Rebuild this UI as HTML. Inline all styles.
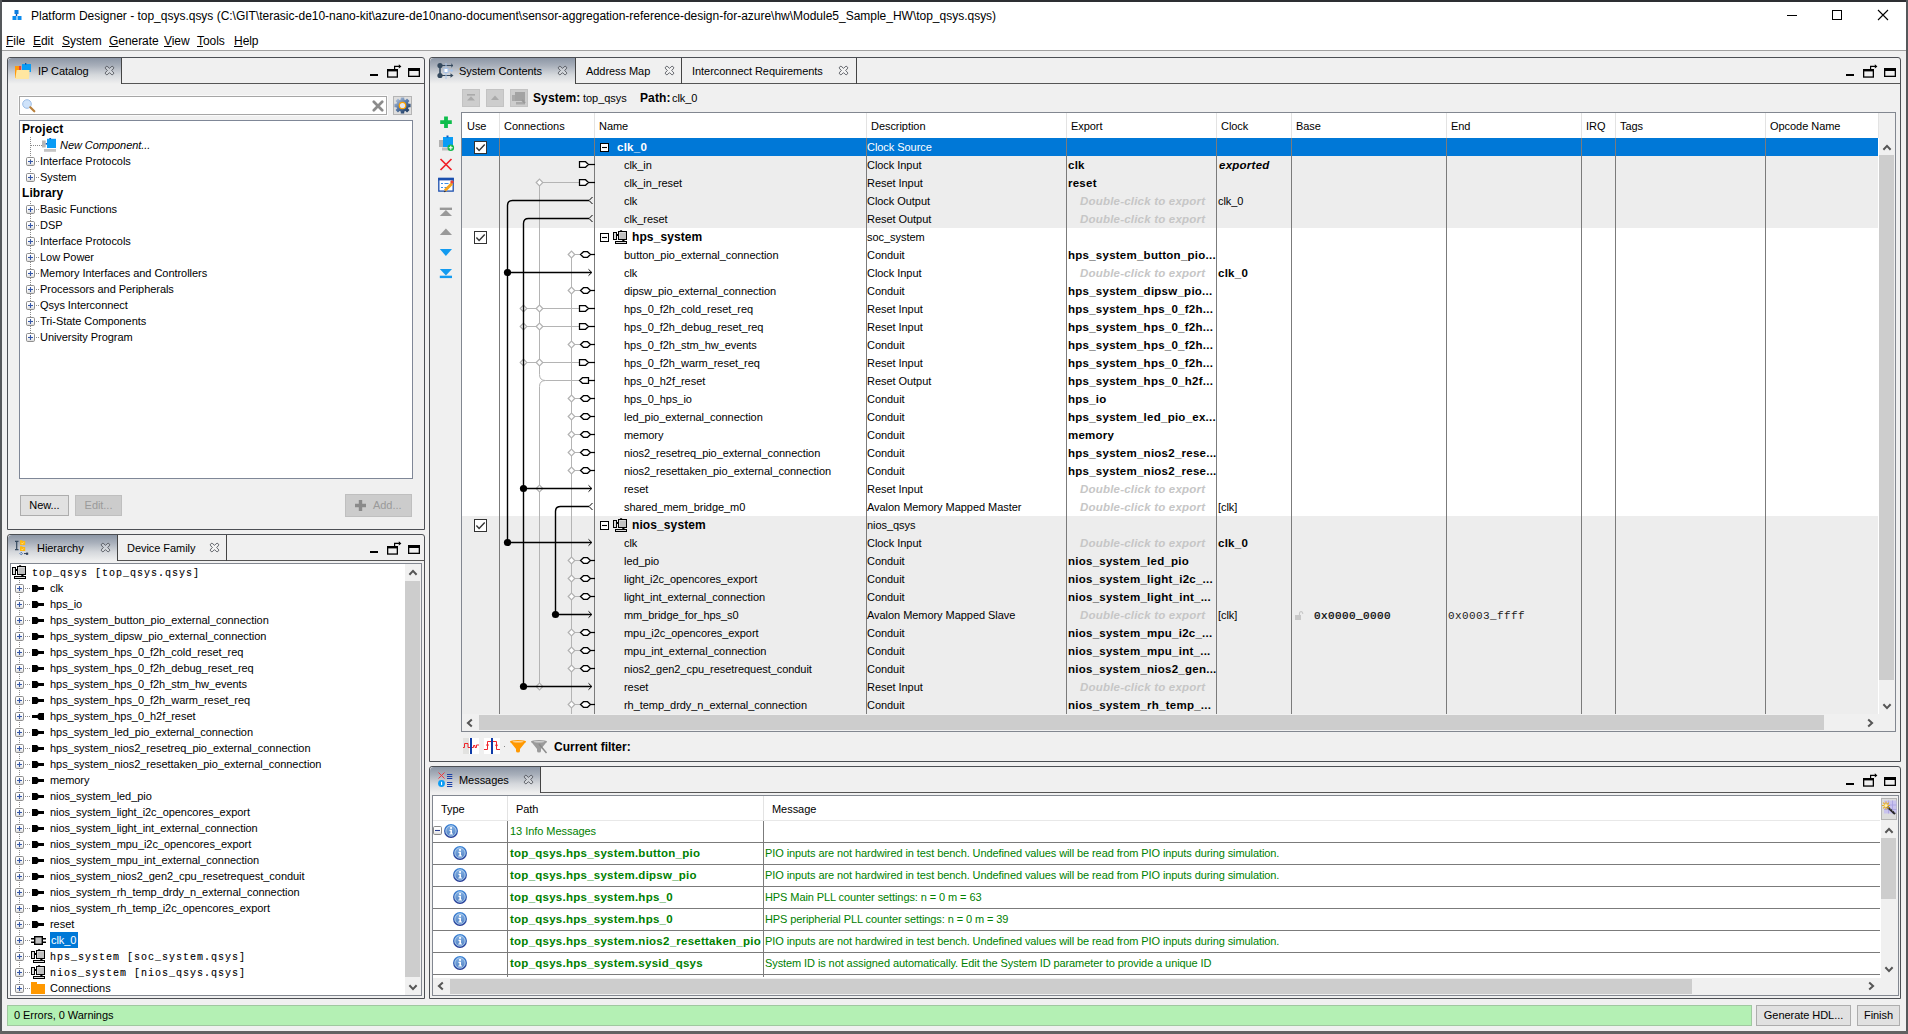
<!DOCTYPE html>
<html lang="en"><head><meta charset="utf-8"><title>Platform Designer - top_qsys.qsys</title>
<style>
*{box-sizing:border-box;margin:0;padding:0}
html,body{width:1908px;height:1034px;overflow:hidden;background:#f0f0f0}
body{position:relative;font-family:"Liberation Sans",sans-serif;font-size:11px;color:#000;line-height:16px;letter-spacing:-.05px}
.a{position:absolute}
.t{position:absolute;white-space:nowrap}
.b{font-weight:bold;font-size:11.5px;letter-spacing:.25px}
.hb{font-weight:bold;font-size:12px;letter-spacing:.1px}
.i{font-style:italic}
.m{font-family:"Liberation Mono",monospace;letter-spacing:.4px}
.mb{font-family:"Liberation Mono",monospace;font-size:10px;letter-spacing:1px;-webkit-text-stroke:.12px #000}
.r16{height:16px;line-height:16px}
.r18{height:18px;line-height:18px}
.r22{height:22px;line-height:22px}
.g{color:#008000}
.dc{color:#c6c6c6;font-style:italic;font-weight:bold;font-size:11.5px;letter-spacing:.2px}
.panel{position:absolute;border:1px solid #4c4f54;border-radius:3px 3px 0 0;background:#f0f0f0}
.tabsel{position:absolute;background:linear-gradient(#8c96a5 0%,#a9b0bb 30%,#d5d8dc 65%,#f0f0f0 100%);border-radius:4px 0 0 0}
.btn{position:absolute;background:#e1e1e1;border:1px solid #adadad;text-align:center}
.btnd{position:absolute;background:#cccccc;border:1px solid #bfbfbf;text-align:center;color:#9a9a9a}
.vsep{position:absolute;width:1px;background:#7b7b7b}
.hsep{position:absolute;height:1px;background:#7b7b7b}
.sb{position:absolute;background:#f0f0f0}
.th{position:absolute;background:#cdcdcd}
</style></head>
<body>
<svg width="0" height="0" style="position:absolute"><defs><linearGradient id="ig" x1="0" y1="0" x2="0" y2="1"><stop offset="0" stop-color="#86b4e6"/><stop offset="1" stop-color="#4c7cc0"/></linearGradient><linearGradient id="is" x1="0" y1="0" x2="0" y2="1"><stop offset="0" stop-color="#3c86d8"/><stop offset="1" stop-color="#2a3c94"/></linearGradient><linearGradient id="pg" x1="0" y1="0" x2="0" y2="1"><stop offset="0" stop-color="#fff"/><stop offset=".55" stop-color="#fdfdfd"/><stop offset="1" stop-color="#d6d6d6"/></linearGradient></defs></svg>
<div class="a" style="left:0;top:0;width:1908px;height:1034px;background:#6e6e6e"></div>
<div class="a" style="left:0;top:0;width:1908px;height:2px;background:#2d2f33"></div>
<div class="a" style="left:0;top:0;width:2px;height:1034px;background:#55585b"></div>
<div class="a" style="left:1906px;top:0;width:2px;height:1034px;background:#55585b"></div>
<div class="a" style="left:2px;top:2px;width:1904px;height:1029px;background:#f0f0f0"></div>
<div class="a" style="left:0;top:1031px;width:1908px;height:3px;background:#626262"></div>
<div class="a" style="left:2px;top:2px;width:1904px;height:48px;background:#fff"></div>
<div class="a" style="left:2px;top:50px;width:1904px;height:1px;background:#a0a0a0"></div>
<svg class="a" style="left:12px;top:9px" width="12" height="12" viewBox="0 0 12 12"><rect x="2.5" y="1" width="4" height="4" fill="#0a7de0"/><rect x="0.5" y="7" width="4" height="4" fill="#0a8cf0"/><rect x="5.5" y="7" width="4" height="4" fill="#0a8cf0"/><path d="M4.5 5v2" stroke="#0a50b0" stroke-width="1.4"/></svg>
<div class="t" style="left:31px;top:7px;height:18px;line-height:18px;font-size:12px;letter-spacing:-.012px">Platform Designer - top_qsys.qsys (C:\GIT\terasic-de10-nano-kit\azure-de10nano-document\sensor-aggregation-reference-design-for-azure\hw\Module5_Sample_HW\top_qsys.qsys)</div>
<svg class="a" style="left:1780px;top:5px" width="120" height="22" viewBox="0 0 120 22"><path d="M7 10.5h10" stroke="#000" stroke-width="1"/><rect x="52.5" y="5.5" width="9" height="9" fill="none" stroke="#000" stroke-width="1"/><path d="M98 5l10 10M108 5l-10 10" stroke="#000" stroke-width="1.1"/></svg>
<div class="t" style="left:6px;top:32px;height:18px;line-height:18px;font-size:12px"><u>F</u>ile</div>
<div class="t" style="left:33px;top:32px;height:18px;line-height:18px;font-size:12px"><u>E</u>dit</div>
<div class="t" style="left:62px;top:32px;height:18px;line-height:18px;font-size:12px"><u>S</u>ystem</div>
<div class="t" style="left:109px;top:32px;height:18px;line-height:18px;font-size:12px"><u>G</u>enerate</div>
<div class="t" style="left:164px;top:32px;height:18px;line-height:18px;font-size:12px"><u>V</u>iew</div>
<div class="t" style="left:197px;top:32px;height:18px;line-height:18px;font-size:12px"><u>T</u>ools</div>
<div class="t" style="left:234px;top:32px;height:18px;line-height:18px;font-size:12px"><u>H</u>elp</div>
<div class="panel" style="left:7px;top:57px;width:418px;height:473px"></div>
<div class="tabsel" style="left:8px;top:58px;width:113px;height:26px"></div>
<div class="a" style="left:121px;top:83px;width:303px;height:1px;background:#555"></div>
<div class="a" style="left:121px;top:58px;width:1px;height:26px;background:#444"></div>
<svg class="a" style="left:15px;top:63px" width="16" height="16" viewBox="0 0 16 16"><rect x="0" y="3" width="5" height="12" fill="#ff9a0a"/><rect x="4" y="3" width="2.2" height="4" fill="#e8453c"/><rect x="7" y="1" width="9" height="8" fill="#0a9cf5"/><rect x="10" y="0" width="1.3" height="1.6" fill="#0a4ea8"/><path d="M1.6 7h13l-.8 9H.2z" fill="#ffe6a0"/></svg>
<div class="t" style="left:38px;top:63px;height:16px;line-height:16px">IP Catalog</div>
<svg class="a" style="left:104px;top:65px" width="11" height="11" viewBox="0 0 11 11"><path d="M5.50 3.38L7.13 1.75A1.5 1.5 0 0 1 9.25 3.87L7.62 5.50L7.62 5.50L9.25 7.13A1.5 1.5 0 0 1 7.13 9.25L5.50 7.62L5.50 7.62L3.87 9.25A1.5 1.5 0 0 1 1.75 7.13L3.38 5.50L3.38 5.50L1.75 3.87A1.5 1.5 0 0 1 3.87 1.75L5.50 3.38Z" fill="rgba(255,255,255,.22)" stroke="#50545a" stroke-width=".9"/></svg>
<svg class="a" style="left:370px;top:65px" width="54" height="16" viewBox="0 0 54 16" overflow="visible"><rect x="0" y="9" width="8" height="2" fill="#000"/><rect x="17.650" y="4.650" width="9.700" height="7.400" fill="none" stroke="#000" stroke-width="1.300"/><rect x="17" y="4" width="11" height="2.400" fill="#000"/><path d="M24.600 4.200V1.400H29.500" fill="none" stroke="#000" stroke-width="1.200"/><path d="M28.800 -.7L31.400 1.400L28.800 3.500Z" fill="#000"/><rect x="38.650" y="3.650" width="10.700" height="7.700" fill="none" stroke="#000" stroke-width="1.300"/><rect x="38" y="3" width="12" height="3" fill="#000"/></svg>
<div class="a" style="left:18px;top:95px;width:370px;height:21px;background:#fafafa"></div><div class="a" style="left:19px;top:96px;width:368px;height:19px;background:#fff;border:1px solid #a6a6a6"></div>
<svg class="a" style="left:22px;top:99px" width="14" height="14" viewBox="0 0 14 14"><circle cx="5" cy="5" r="4.3" fill="#cfe3fa" stroke="#9dbde6" stroke-width="1"/><path d="M8.3 8.3l4 4" stroke="#b9813d" stroke-width="2.2" stroke-linecap="round"/></svg>
<svg class="a" style="left:372px;top:100px" width="12" height="12" viewBox="0 0 12 12"><path d="M1.800 1.800l8.400 8.400M10.200 1.800l-8.400 8.400" stroke="#8b8b8b" stroke-width="2.700" stroke-linecap="round"/></svg>
<div class="a" style="left:393px;top:96px;width:19px;height:19px;background:#dedede;border:1px solid #b4b4b4"></div>
<svg class="a" style="left:394px;top:97px" width="17" height="17" viewBox="0 0 17 17"><defs><linearGradient id="gg" gradientUnits="userSpaceOnUse" x1="2" y1="1" x2="14" y2="16"><stop offset="0" stop-color="#b9c8de"/><stop offset=".45" stop-color="#5f7fab"/><stop offset="1" stop-color="#19365c"/></linearGradient></defs><path d="M6.76 2.45L6.77 0.38L10.23 0.38L10.24 2.45L11.55 2.99L13.02 1.54L15.46 3.98L14.01 5.45L14.55 6.76L16.62 6.77L16.62 10.23L14.55 10.24L14.01 11.55L15.46 13.02L13.02 15.46L11.55 14.01L10.24 14.55L10.23 16.62L6.77 16.62L6.76 14.55L5.45 14.01L3.98 15.46L1.54 13.02L2.99 11.55L2.45 10.24L0.38 10.23L0.38 6.77L2.45 6.76L2.99 5.45L1.54 3.98L3.98 1.54L5.45 2.99Z" fill="url(#gg)"/><circle cx="8.500" cy="8.500" r="3.800" fill="#ffa400"/><circle cx="8.500" cy="8.500" r="2.600" fill="#e6e9ef"/></svg>
<div class="a" style="left:19px;top:120px;width:394px;height:359px;background:#fff;border:1px solid #7f8797"></div>
<div class="t hb r16" style="left:22px;top:121px">Project</div>
<div class="a" style="left:31px;top:145px;width:11px;height:1px;background-image:linear-gradient(90deg,#8a8a8a 50%,transparent 50%);background-size:2px 1px"></div>
<svg class="a" style="left:42px;top:138px" width="15" height="15" viewBox="0 0 15 15"><rect x="0" y="2.500" width="3.700" height="7" fill="#b8b8b8"/><rect x="2" y="11" width="12" height="2.800" fill="#c4c4c4"/><rect x="5" y=".8" width="9" height="9.200" fill="#0a9cf5"/><rect x="7.300" y="0" width="1.800" height="1.200" fill="#0a5cc0"/><rect x="3.700" y="5" width="1.300" height="1.600" fill="#0a5cc0"/></svg>
<div class="t i r16" style="left:60px;top:137px">New Component...</div>
<svg class="a" style="left:26px;top:157px" width="9" height="9" viewBox="0 0 9 9"><rect x=".5" y=".5" width="8" height="8" rx="1.200" fill="url(#pg)" stroke="#8f8f8f"/><path d="M2 4.500h5" stroke="#3557a8" stroke-width="1.100"/><path d="M4.500 2v5" stroke="#3557a8" stroke-width="1.100"/></svg>
<div class="a" style="left:36px;top:161px;width:4px;height:1px;background-image:linear-gradient(90deg,#8a8a8a 50%,transparent 50%);background-size:2px 1px"></div>
<div class="t r16" style="left:40px;top:153px">Interface Protocols</div>
<svg class="a" style="left:26px;top:173px" width="9" height="9" viewBox="0 0 9 9"><rect x=".5" y=".5" width="8" height="8" rx="1.200" fill="url(#pg)" stroke="#8f8f8f"/><path d="M2 4.500h5" stroke="#3557a8" stroke-width="1.100"/><path d="M4.500 2v5" stroke="#3557a8" stroke-width="1.100"/></svg>
<div class="a" style="left:36px;top:177px;width:4px;height:1px;background-image:linear-gradient(90deg,#8a8a8a 50%,transparent 50%);background-size:2px 1px"></div>
<div class="t r16" style="left:40px;top:169px">System</div>
<div class="t hb r16" style="left:22px;top:185px">Library</div>
<svg class="a" style="left:26px;top:205px" width="9" height="9" viewBox="0 0 9 9"><rect x=".5" y=".5" width="8" height="8" rx="1.200" fill="url(#pg)" stroke="#8f8f8f"/><path d="M2 4.500h5" stroke="#3557a8" stroke-width="1.100"/><path d="M4.500 2v5" stroke="#3557a8" stroke-width="1.100"/></svg>
<div class="a" style="left:36px;top:209px;width:4px;height:1px;background-image:linear-gradient(90deg,#8a8a8a 50%,transparent 50%);background-size:2px 1px"></div>
<div class="t r16" style="left:40px;top:201px">Basic Functions</div>
<svg class="a" style="left:26px;top:221px" width="9" height="9" viewBox="0 0 9 9"><rect x=".5" y=".5" width="8" height="8" rx="1.200" fill="url(#pg)" stroke="#8f8f8f"/><path d="M2 4.500h5" stroke="#3557a8" stroke-width="1.100"/><path d="M4.500 2v5" stroke="#3557a8" stroke-width="1.100"/></svg>
<div class="a" style="left:36px;top:225px;width:4px;height:1px;background-image:linear-gradient(90deg,#8a8a8a 50%,transparent 50%);background-size:2px 1px"></div>
<div class="t r16" style="left:40px;top:217px">DSP</div>
<svg class="a" style="left:26px;top:237px" width="9" height="9" viewBox="0 0 9 9"><rect x=".5" y=".5" width="8" height="8" rx="1.200" fill="url(#pg)" stroke="#8f8f8f"/><path d="M2 4.500h5" stroke="#3557a8" stroke-width="1.100"/><path d="M4.500 2v5" stroke="#3557a8" stroke-width="1.100"/></svg>
<div class="a" style="left:36px;top:241px;width:4px;height:1px;background-image:linear-gradient(90deg,#8a8a8a 50%,transparent 50%);background-size:2px 1px"></div>
<div class="t r16" style="left:40px;top:233px">Interface Protocols</div>
<svg class="a" style="left:26px;top:253px" width="9" height="9" viewBox="0 0 9 9"><rect x=".5" y=".5" width="8" height="8" rx="1.200" fill="url(#pg)" stroke="#8f8f8f"/><path d="M2 4.500h5" stroke="#3557a8" stroke-width="1.100"/><path d="M4.500 2v5" stroke="#3557a8" stroke-width="1.100"/></svg>
<div class="a" style="left:36px;top:257px;width:4px;height:1px;background-image:linear-gradient(90deg,#8a8a8a 50%,transparent 50%);background-size:2px 1px"></div>
<div class="t r16" style="left:40px;top:249px">Low Power</div>
<svg class="a" style="left:26px;top:269px" width="9" height="9" viewBox="0 0 9 9"><rect x=".5" y=".5" width="8" height="8" rx="1.200" fill="url(#pg)" stroke="#8f8f8f"/><path d="M2 4.500h5" stroke="#3557a8" stroke-width="1.100"/><path d="M4.500 2v5" stroke="#3557a8" stroke-width="1.100"/></svg>
<div class="a" style="left:36px;top:273px;width:4px;height:1px;background-image:linear-gradient(90deg,#8a8a8a 50%,transparent 50%);background-size:2px 1px"></div>
<div class="t r16" style="left:40px;top:265px">Memory Interfaces and Controllers</div>
<svg class="a" style="left:26px;top:285px" width="9" height="9" viewBox="0 0 9 9"><rect x=".5" y=".5" width="8" height="8" rx="1.200" fill="url(#pg)" stroke="#8f8f8f"/><path d="M2 4.500h5" stroke="#3557a8" stroke-width="1.100"/><path d="M4.500 2v5" stroke="#3557a8" stroke-width="1.100"/></svg>
<div class="a" style="left:36px;top:289px;width:4px;height:1px;background-image:linear-gradient(90deg,#8a8a8a 50%,transparent 50%);background-size:2px 1px"></div>
<div class="t r16" style="left:40px;top:281px">Processors and Peripherals</div>
<svg class="a" style="left:26px;top:301px" width="9" height="9" viewBox="0 0 9 9"><rect x=".5" y=".5" width="8" height="8" rx="1.200" fill="url(#pg)" stroke="#8f8f8f"/><path d="M2 4.500h5" stroke="#3557a8" stroke-width="1.100"/><path d="M4.500 2v5" stroke="#3557a8" stroke-width="1.100"/></svg>
<div class="a" style="left:36px;top:305px;width:4px;height:1px;background-image:linear-gradient(90deg,#8a8a8a 50%,transparent 50%);background-size:2px 1px"></div>
<div class="t r16" style="left:40px;top:297px">Qsys Interconnect</div>
<svg class="a" style="left:26px;top:317px" width="9" height="9" viewBox="0 0 9 9"><rect x=".5" y=".5" width="8" height="8" rx="1.200" fill="url(#pg)" stroke="#8f8f8f"/><path d="M2 4.500h5" stroke="#3557a8" stroke-width="1.100"/><path d="M4.500 2v5" stroke="#3557a8" stroke-width="1.100"/></svg>
<div class="a" style="left:36px;top:321px;width:4px;height:1px;background-image:linear-gradient(90deg,#8a8a8a 50%,transparent 50%);background-size:2px 1px"></div>
<div class="t r16" style="left:40px;top:313px">Tri-State Components</div>
<svg class="a" style="left:26px;top:333px" width="9" height="9" viewBox="0 0 9 9"><rect x=".5" y=".5" width="8" height="8" rx="1.200" fill="url(#pg)" stroke="#8f8f8f"/><path d="M2 4.500h5" stroke="#3557a8" stroke-width="1.100"/><path d="M4.500 2v5" stroke="#3557a8" stroke-width="1.100"/></svg>
<div class="a" style="left:36px;top:337px;width:4px;height:1px;background-image:linear-gradient(90deg,#8a8a8a 50%,transparent 50%);background-size:2px 1px"></div>
<div class="t r16" style="left:40px;top:329px">University Program</div>
<div class="a" style="left:30px;top:137px;width:1px;height:24px;background-image:linear-gradient(#8a8a8a 50%,transparent 50%);background-size:1px 2px"></div>
<div class="a" style="left:30px;top:169px;width:1px;height:4px;background-image:linear-gradient(#8a8a8a 50%,transparent 50%);background-size:1px 2px"></div>
<div class="a" style="left:30px;top:201px;width:1px;height:4px;background-image:linear-gradient(#8a8a8a 50%,transparent 50%);background-size:1px 2px"></div>
<div class="a" style="left:30px;top:214px;width:1px;height:7px;background-image:linear-gradient(#8a8a8a 50%,transparent 50%);background-size:1px 2px"></div>
<div class="a" style="left:30px;top:230px;width:1px;height:7px;background-image:linear-gradient(#8a8a8a 50%,transparent 50%);background-size:1px 2px"></div>
<div class="a" style="left:30px;top:246px;width:1px;height:7px;background-image:linear-gradient(#8a8a8a 50%,transparent 50%);background-size:1px 2px"></div>
<div class="a" style="left:30px;top:262px;width:1px;height:7px;background-image:linear-gradient(#8a8a8a 50%,transparent 50%);background-size:1px 2px"></div>
<div class="a" style="left:30px;top:278px;width:1px;height:7px;background-image:linear-gradient(#8a8a8a 50%,transparent 50%);background-size:1px 2px"></div>
<div class="a" style="left:30px;top:294px;width:1px;height:7px;background-image:linear-gradient(#8a8a8a 50%,transparent 50%);background-size:1px 2px"></div>
<div class="a" style="left:30px;top:310px;width:1px;height:7px;background-image:linear-gradient(#8a8a8a 50%,transparent 50%);background-size:1px 2px"></div>
<div class="a" style="left:30px;top:326px;width:1px;height:7px;background-image:linear-gradient(#8a8a8a 50%,transparent 50%);background-size:1px 2px"></div>
<div class="btn r16" style="left:20px;top:495px;width:49px;height:21px;line-height:19px">New...</div>
<div class="btnd r16" style="left:75px;top:495px;width:47px;height:21px;line-height:19px">Edit...</div>
<div class="btnd r16" style="left:345px;top:494px;width:67px;height:23px;line-height:21px;text-align:left;padding-left:27px">Add...</div>
<svg class="a" style="left:355px;top:500px" width="11" height="11" viewBox="0 0 11 11"><path d="M5.5 0v11M0 5.5h11" stroke="#8a8a8a" stroke-width="3.4"/></svg>
<div class="panel" style="left:7px;top:534px;width:418px;height:465px"></div>
<div class="tabsel" style="left:8px;top:535px;width:109px;height:26px"></div>
<div class="a" style="left:117px;top:560px;width:307px;height:1px;background:#555"></div>
<div class="a" style="left:117px;top:535px;width:1px;height:26px;background:#444"></div>
<svg class="a" style="left:14px;top:539px" width="16" height="17" viewBox="0 0 16 17"><path d="M2.700 2.500v8" stroke="#34495e" stroke-width="1.200"/><path d="M1 2.300h3.500M1 10.700h3.500" stroke="#34495e" stroke-width="1.300"/><path d="M6 1.200h2.200l.6 .9h2.400v3.900h-5.200z" fill="#fdb813"/><path d="M6 7.200h2.200l.6 .9h2.400v3.900h-5.200z" fill="#fdb813"/><path d="M7.500 4.300l.9 .5l1.300-1.300M7.500 10.300l.9 .5l1.300-1.300" stroke="#fff3c0" stroke-width=".7" fill="none"/><path d="M7.200 13.300l1.300 1.300l-1.300 1.300l-1.300-1.300z" fill="none" stroke="#2d5fa8" stroke-width=".8"/><path d="M10 14.600h3" stroke="#2d3e5a" stroke-width="1"/><rect x="12" y="13.600" width="2.200" height="2.200" fill="#2d3e5a"/></svg>
<div class="t" style="left:37px;top:540px;height:16px;line-height:16px">Hierarchy</div>
<svg class="a" style="left:100px;top:542px" width="11" height="11" viewBox="0 0 11 11"><path d="M5.50 3.38L7.13 1.75A1.5 1.5 0 0 1 9.25 3.87L7.62 5.50L7.62 5.50L9.25 7.13A1.5 1.5 0 0 1 7.13 9.25L5.50 7.62L5.50 7.62L3.87 9.25A1.5 1.5 0 0 1 1.75 7.13L3.38 5.50L3.38 5.50L1.75 3.87A1.5 1.5 0 0 1 3.87 1.75L5.50 3.38Z" fill="rgba(255,255,255,.22)" stroke="#50545a" stroke-width=".9"/></svg>
<div class="t" style="left:127px;top:540px;height:16px;line-height:16px">Device Family</div>
<svg class="a" style="left:209px;top:542px" width="11" height="11" viewBox="0 0 11 11"><path d="M5.50 3.38L7.13 1.75A1.5 1.5 0 0 1 9.25 3.87L7.62 5.50L7.62 5.50L9.25 7.13A1.5 1.5 0 0 1 7.13 9.25L5.50 7.62L5.50 7.62L3.87 9.25A1.5 1.5 0 0 1 1.75 7.13L3.38 5.50L3.38 5.50L1.75 3.87A1.5 1.5 0 0 1 3.87 1.75L5.50 3.38Z" fill="rgba(255,255,255,.22)" stroke="#50545a" stroke-width=".9"/></svg>
<div class="a" style="left:226px;top:535px;width:1px;height:26px;background:#444"></div>
<svg class="a" style="left:370px;top:542px" width="54" height="16" viewBox="0 0 54 16" overflow="visible"><rect x="0" y="9" width="8" height="2" fill="#000"/><rect x="17.650" y="4.650" width="9.700" height="7.400" fill="none" stroke="#000" stroke-width="1.300"/><rect x="17" y="4" width="11" height="2.400" fill="#000"/><path d="M24.600 4.200V1.400H29.500" fill="none" stroke="#000" stroke-width="1.200"/><path d="M28.800 -.7L31.400 1.400L28.800 3.500Z" fill="#000"/><rect x="38.650" y="3.650" width="10.700" height="7.700" fill="none" stroke="#000" stroke-width="1.300"/><rect x="38" y="3" width="12" height="3" fill="#000"/></svg>
<div class="a" style="left:10px;top:563px;width:412px;height:433px;background:#fff;border:1px solid #828790"></div>
<div class="sb" style="left:405px;top:564px;width:16px;height:431px"></div>
<div class="th" style="left:405px;top:581px;width:15px;height:396px"></div>
<svg class="a" style="left:408px;top:569px" width="10" height="7" viewBox="0 0 10 7"><path d="M1.400 5.800l3.600-3.900l3.600 3.900" fill="none" stroke="#555" stroke-width="2"/></svg>
<svg class="a" style="left:408px;top:984px" width="10" height="7" viewBox="0 0 10 7"><path d="M1.400 1.200l3.600 3.900l3.600-3.900" fill="none" stroke="#555" stroke-width="2"/></svg>
<svg class="a" style="left:12px;top:565px" width="14" height="14" viewBox="0 0 14 14"><rect x=".5" y="2.500" width="3" height="7" fill="#dcdcdc" stroke="#000"/><rect x="4" y="4" width="1.500" height="2" fill="#000"/><rect x="5.500" y="1.500" width="8" height="8" fill="#c0c0c0" stroke="#000"/><path d="M6.500 8.500v-6h6" fill="none" stroke="#d9d9d9"/><path d="M7 1.500L7.500 .4h1.200L9.200 1.500z" fill="#000" stroke="#000" stroke-width=".6"/><rect x="9.300" y="10" width="2.200" height="1.500" fill="#000"/><rect x="2.500" y="11.500" width="11" height="2" fill="#dcdcdc" stroke="#000"/></svg>
<div class="t mb r16" style="left:32px;top:566px">top_qsys [top_qsys.qsys]</div>
<div class="a" style="left:19px;top:580px;width:1px;height:412px;background-image:linear-gradient(#8a8a8a 50%,transparent 50%);background-size:1px 2px"></div>
<svg class="a" style="left:15px;top:584px" width="9" height="9" viewBox="0 0 9 9"><rect x=".5" y=".5" width="8" height="8" rx="1.200" fill="url(#pg)" stroke="#8f8f8f"/><path d="M2 4.500h5" stroke="#3557a8" stroke-width="1.100"/><path d="M4.500 2v5" stroke="#3557a8" stroke-width="1.100"/></svg>
<div class="a" style="left:25px;top:588px;width:6px;height:1px;background-image:linear-gradient(90deg,#8a8a8a 50%,transparent 50%);background-size:2px 1px"></div>
<svg class="a" style="left:32px;top:585px" width="12" height="7" viewBox="0 0 12 7"><path d="M0 0h5l1.600 2h5.400v3h-5.400l-1.600 2h-5z" fill="#000"/></svg>
<div class="t r16" style="left:50px;top:580px">clk</div>
<svg class="a" style="left:15px;top:600px" width="9" height="9" viewBox="0 0 9 9"><rect x=".5" y=".5" width="8" height="8" rx="1.200" fill="url(#pg)" stroke="#8f8f8f"/><path d="M2 4.500h5" stroke="#3557a8" stroke-width="1.100"/><path d="M4.500 2v5" stroke="#3557a8" stroke-width="1.100"/></svg>
<div class="a" style="left:25px;top:604px;width:6px;height:1px;background-image:linear-gradient(90deg,#8a8a8a 50%,transparent 50%);background-size:2px 1px"></div>
<svg class="a" style="left:32px;top:601px" width="12" height="7" viewBox="0 0 12 7"><path d="M0 0h5l1.600 2h5.400v3h-5.400l-1.600 2h-5z" fill="#000"/></svg>
<div class="t r16" style="left:50px;top:596px">hps_io</div>
<svg class="a" style="left:15px;top:616px" width="9" height="9" viewBox="0 0 9 9"><rect x=".5" y=".5" width="8" height="8" rx="1.200" fill="url(#pg)" stroke="#8f8f8f"/><path d="M2 4.500h5" stroke="#3557a8" stroke-width="1.100"/><path d="M4.500 2v5" stroke="#3557a8" stroke-width="1.100"/></svg>
<div class="a" style="left:25px;top:620px;width:6px;height:1px;background-image:linear-gradient(90deg,#8a8a8a 50%,transparent 50%);background-size:2px 1px"></div>
<svg class="a" style="left:32px;top:617px" width="12" height="7" viewBox="0 0 12 7"><path d="M0 0h5l1.600 2h5.400v3h-5.400l-1.600 2h-5z" fill="#000"/></svg>
<div class="t r16" style="left:50px;top:612px">hps_system_button_pio_external_connection</div>
<svg class="a" style="left:15px;top:632px" width="9" height="9" viewBox="0 0 9 9"><rect x=".5" y=".5" width="8" height="8" rx="1.200" fill="url(#pg)" stroke="#8f8f8f"/><path d="M2 4.500h5" stroke="#3557a8" stroke-width="1.100"/><path d="M4.500 2v5" stroke="#3557a8" stroke-width="1.100"/></svg>
<div class="a" style="left:25px;top:636px;width:6px;height:1px;background-image:linear-gradient(90deg,#8a8a8a 50%,transparent 50%);background-size:2px 1px"></div>
<svg class="a" style="left:32px;top:633px" width="12" height="7" viewBox="0 0 12 7"><path d="M0 0h5l1.600 2h5.400v3h-5.400l-1.600 2h-5z" fill="#000"/></svg>
<div class="t r16" style="left:50px;top:628px">hps_system_dipsw_pio_external_connection</div>
<svg class="a" style="left:15px;top:648px" width="9" height="9" viewBox="0 0 9 9"><rect x=".5" y=".5" width="8" height="8" rx="1.200" fill="url(#pg)" stroke="#8f8f8f"/><path d="M2 4.500h5" stroke="#3557a8" stroke-width="1.100"/><path d="M4.500 2v5" stroke="#3557a8" stroke-width="1.100"/></svg>
<div class="a" style="left:25px;top:652px;width:6px;height:1px;background-image:linear-gradient(90deg,#8a8a8a 50%,transparent 50%);background-size:2px 1px"></div>
<svg class="a" style="left:32px;top:649px" width="12" height="7" viewBox="0 0 12 7"><path d="M0 0h5l1.600 2h5.400v3h-5.400l-1.600 2h-5z" fill="#000"/></svg>
<div class="t r16" style="left:50px;top:644px">hps_system_hps_0_f2h_cold_reset_req</div>
<svg class="a" style="left:15px;top:664px" width="9" height="9" viewBox="0 0 9 9"><rect x=".5" y=".5" width="8" height="8" rx="1.200" fill="url(#pg)" stroke="#8f8f8f"/><path d="M2 4.500h5" stroke="#3557a8" stroke-width="1.100"/><path d="M4.500 2v5" stroke="#3557a8" stroke-width="1.100"/></svg>
<div class="a" style="left:25px;top:668px;width:6px;height:1px;background-image:linear-gradient(90deg,#8a8a8a 50%,transparent 50%);background-size:2px 1px"></div>
<svg class="a" style="left:32px;top:665px" width="12" height="7" viewBox="0 0 12 7"><path d="M0 0h5l1.600 2h5.400v3h-5.400l-1.600 2h-5z" fill="#000"/></svg>
<div class="t r16" style="left:50px;top:660px">hps_system_hps_0_f2h_debug_reset_req</div>
<svg class="a" style="left:15px;top:680px" width="9" height="9" viewBox="0 0 9 9"><rect x=".5" y=".5" width="8" height="8" rx="1.200" fill="url(#pg)" stroke="#8f8f8f"/><path d="M2 4.500h5" stroke="#3557a8" stroke-width="1.100"/><path d="M4.500 2v5" stroke="#3557a8" stroke-width="1.100"/></svg>
<div class="a" style="left:25px;top:684px;width:6px;height:1px;background-image:linear-gradient(90deg,#8a8a8a 50%,transparent 50%);background-size:2px 1px"></div>
<svg class="a" style="left:32px;top:681px" width="12" height="7" viewBox="0 0 12 7"><path d="M0 0h5l1.600 2h5.400v3h-5.400l-1.600 2h-5z" fill="#000"/></svg>
<div class="t r16" style="left:50px;top:676px">hps_system_hps_0_f2h_stm_hw_events</div>
<svg class="a" style="left:15px;top:696px" width="9" height="9" viewBox="0 0 9 9"><rect x=".5" y=".5" width="8" height="8" rx="1.200" fill="url(#pg)" stroke="#8f8f8f"/><path d="M2 4.500h5" stroke="#3557a8" stroke-width="1.100"/><path d="M4.500 2v5" stroke="#3557a8" stroke-width="1.100"/></svg>
<div class="a" style="left:25px;top:700px;width:6px;height:1px;background-image:linear-gradient(90deg,#8a8a8a 50%,transparent 50%);background-size:2px 1px"></div>
<svg class="a" style="left:32px;top:697px" width="12" height="7" viewBox="0 0 12 7"><path d="M0 0h5l1.600 2h5.400v3h-5.400l-1.600 2h-5z" fill="#000"/></svg>
<div class="t r16" style="left:50px;top:692px">hps_system_hps_0_f2h_warm_reset_req</div>
<svg class="a" style="left:15px;top:712px" width="9" height="9" viewBox="0 0 9 9"><rect x=".5" y=".5" width="8" height="8" rx="1.200" fill="url(#pg)" stroke="#8f8f8f"/><path d="M2 4.500h5" stroke="#3557a8" stroke-width="1.100"/><path d="M4.500 2v5" stroke="#3557a8" stroke-width="1.100"/></svg>
<div class="a" style="left:25px;top:716px;width:6px;height:1px;background-image:linear-gradient(90deg,#8a8a8a 50%,transparent 50%);background-size:2px 1px"></div>
<svg class="a" style="left:32px;top:713px" width="12" height="7" viewBox="0 0 12 7"><path d="M12 0h-5l-1.600 2h-5.400v3h5.400l1.600 2h5z" fill="#000"/></svg>
<div class="t r16" style="left:50px;top:708px">hps_system_hps_0_h2f_reset</div>
<svg class="a" style="left:15px;top:728px" width="9" height="9" viewBox="0 0 9 9"><rect x=".5" y=".5" width="8" height="8" rx="1.200" fill="url(#pg)" stroke="#8f8f8f"/><path d="M2 4.500h5" stroke="#3557a8" stroke-width="1.100"/><path d="M4.500 2v5" stroke="#3557a8" stroke-width="1.100"/></svg>
<div class="a" style="left:25px;top:732px;width:6px;height:1px;background-image:linear-gradient(90deg,#8a8a8a 50%,transparent 50%);background-size:2px 1px"></div>
<svg class="a" style="left:32px;top:729px" width="12" height="7" viewBox="0 0 12 7"><path d="M0 0h5l1.600 2h5.400v3h-5.400l-1.600 2h-5z" fill="#000"/></svg>
<div class="t r16" style="left:50px;top:724px">hps_system_led_pio_external_connection</div>
<svg class="a" style="left:15px;top:744px" width="9" height="9" viewBox="0 0 9 9"><rect x=".5" y=".5" width="8" height="8" rx="1.200" fill="url(#pg)" stroke="#8f8f8f"/><path d="M2 4.500h5" stroke="#3557a8" stroke-width="1.100"/><path d="M4.500 2v5" stroke="#3557a8" stroke-width="1.100"/></svg>
<div class="a" style="left:25px;top:748px;width:6px;height:1px;background-image:linear-gradient(90deg,#8a8a8a 50%,transparent 50%);background-size:2px 1px"></div>
<svg class="a" style="left:32px;top:745px" width="12" height="7" viewBox="0 0 12 7"><path d="M0 0h5l1.600 2h5.400v3h-5.400l-1.600 2h-5z" fill="#000"/></svg>
<div class="t r16" style="left:50px;top:740px">hps_system_nios2_resetreq_pio_external_connection</div>
<svg class="a" style="left:15px;top:760px" width="9" height="9" viewBox="0 0 9 9"><rect x=".5" y=".5" width="8" height="8" rx="1.200" fill="url(#pg)" stroke="#8f8f8f"/><path d="M2 4.500h5" stroke="#3557a8" stroke-width="1.100"/><path d="M4.500 2v5" stroke="#3557a8" stroke-width="1.100"/></svg>
<div class="a" style="left:25px;top:764px;width:6px;height:1px;background-image:linear-gradient(90deg,#8a8a8a 50%,transparent 50%);background-size:2px 1px"></div>
<svg class="a" style="left:32px;top:761px" width="12" height="7" viewBox="0 0 12 7"><path d="M0 0h5l1.600 2h5.400v3h-5.400l-1.600 2h-5z" fill="#000"/></svg>
<div class="t r16" style="left:50px;top:756px">hps_system_nios2_resettaken_pio_external_connection</div>
<svg class="a" style="left:15px;top:776px" width="9" height="9" viewBox="0 0 9 9"><rect x=".5" y=".5" width="8" height="8" rx="1.200" fill="url(#pg)" stroke="#8f8f8f"/><path d="M2 4.500h5" stroke="#3557a8" stroke-width="1.100"/><path d="M4.500 2v5" stroke="#3557a8" stroke-width="1.100"/></svg>
<div class="a" style="left:25px;top:780px;width:6px;height:1px;background-image:linear-gradient(90deg,#8a8a8a 50%,transparent 50%);background-size:2px 1px"></div>
<svg class="a" style="left:32px;top:777px" width="12" height="7" viewBox="0 0 12 7"><path d="M0 0h5l1.600 2h5.400v3h-5.400l-1.600 2h-5z" fill="#000"/></svg>
<div class="t r16" style="left:50px;top:772px">memory</div>
<svg class="a" style="left:15px;top:792px" width="9" height="9" viewBox="0 0 9 9"><rect x=".5" y=".5" width="8" height="8" rx="1.200" fill="url(#pg)" stroke="#8f8f8f"/><path d="M2 4.500h5" stroke="#3557a8" stroke-width="1.100"/><path d="M4.500 2v5" stroke="#3557a8" stroke-width="1.100"/></svg>
<div class="a" style="left:25px;top:796px;width:6px;height:1px;background-image:linear-gradient(90deg,#8a8a8a 50%,transparent 50%);background-size:2px 1px"></div>
<svg class="a" style="left:32px;top:793px" width="12" height="7" viewBox="0 0 12 7"><path d="M0 0h5l1.600 2h5.400v3h-5.400l-1.600 2h-5z" fill="#000"/></svg>
<div class="t r16" style="left:50px;top:788px">nios_system_led_pio</div>
<svg class="a" style="left:15px;top:808px" width="9" height="9" viewBox="0 0 9 9"><rect x=".5" y=".5" width="8" height="8" rx="1.200" fill="url(#pg)" stroke="#8f8f8f"/><path d="M2 4.500h5" stroke="#3557a8" stroke-width="1.100"/><path d="M4.500 2v5" stroke="#3557a8" stroke-width="1.100"/></svg>
<div class="a" style="left:25px;top:812px;width:6px;height:1px;background-image:linear-gradient(90deg,#8a8a8a 50%,transparent 50%);background-size:2px 1px"></div>
<svg class="a" style="left:32px;top:809px" width="12" height="7" viewBox="0 0 12 7"><path d="M0 0h5l1.600 2h5.400v3h-5.400l-1.600 2h-5z" fill="#000"/></svg>
<div class="t r16" style="left:50px;top:804px">nios_system_light_i2c_opencores_export</div>
<svg class="a" style="left:15px;top:824px" width="9" height="9" viewBox="0 0 9 9"><rect x=".5" y=".5" width="8" height="8" rx="1.200" fill="url(#pg)" stroke="#8f8f8f"/><path d="M2 4.500h5" stroke="#3557a8" stroke-width="1.100"/><path d="M4.500 2v5" stroke="#3557a8" stroke-width="1.100"/></svg>
<div class="a" style="left:25px;top:828px;width:6px;height:1px;background-image:linear-gradient(90deg,#8a8a8a 50%,transparent 50%);background-size:2px 1px"></div>
<svg class="a" style="left:32px;top:825px" width="12" height="7" viewBox="0 0 12 7"><path d="M0 0h5l1.600 2h5.400v3h-5.400l-1.600 2h-5z" fill="#000"/></svg>
<div class="t r16" style="left:50px;top:820px">nios_system_light_int_external_connection</div>
<svg class="a" style="left:15px;top:840px" width="9" height="9" viewBox="0 0 9 9"><rect x=".5" y=".5" width="8" height="8" rx="1.200" fill="url(#pg)" stroke="#8f8f8f"/><path d="M2 4.500h5" stroke="#3557a8" stroke-width="1.100"/><path d="M4.500 2v5" stroke="#3557a8" stroke-width="1.100"/></svg>
<div class="a" style="left:25px;top:844px;width:6px;height:1px;background-image:linear-gradient(90deg,#8a8a8a 50%,transparent 50%);background-size:2px 1px"></div>
<svg class="a" style="left:32px;top:841px" width="12" height="7" viewBox="0 0 12 7"><path d="M0 0h5l1.600 2h5.400v3h-5.400l-1.600 2h-5z" fill="#000"/></svg>
<div class="t r16" style="left:50px;top:836px">nios_system_mpu_i2c_opencores_export</div>
<svg class="a" style="left:15px;top:856px" width="9" height="9" viewBox="0 0 9 9"><rect x=".5" y=".5" width="8" height="8" rx="1.200" fill="url(#pg)" stroke="#8f8f8f"/><path d="M2 4.500h5" stroke="#3557a8" stroke-width="1.100"/><path d="M4.500 2v5" stroke="#3557a8" stroke-width="1.100"/></svg>
<div class="a" style="left:25px;top:860px;width:6px;height:1px;background-image:linear-gradient(90deg,#8a8a8a 50%,transparent 50%);background-size:2px 1px"></div>
<svg class="a" style="left:32px;top:857px" width="12" height="7" viewBox="0 0 12 7"><path d="M0 0h5l1.600 2h5.400v3h-5.400l-1.600 2h-5z" fill="#000"/></svg>
<div class="t r16" style="left:50px;top:852px">nios_system_mpu_int_external_connection</div>
<svg class="a" style="left:15px;top:872px" width="9" height="9" viewBox="0 0 9 9"><rect x=".5" y=".5" width="8" height="8" rx="1.200" fill="url(#pg)" stroke="#8f8f8f"/><path d="M2 4.500h5" stroke="#3557a8" stroke-width="1.100"/><path d="M4.500 2v5" stroke="#3557a8" stroke-width="1.100"/></svg>
<div class="a" style="left:25px;top:876px;width:6px;height:1px;background-image:linear-gradient(90deg,#8a8a8a 50%,transparent 50%);background-size:2px 1px"></div>
<svg class="a" style="left:32px;top:873px" width="12" height="7" viewBox="0 0 12 7"><path d="M0 0h5l1.600 2h5.400v3h-5.400l-1.600 2h-5z" fill="#000"/></svg>
<div class="t r16" style="left:50px;top:868px">nios_system_nios2_gen2_cpu_resetrequest_conduit</div>
<svg class="a" style="left:15px;top:888px" width="9" height="9" viewBox="0 0 9 9"><rect x=".5" y=".5" width="8" height="8" rx="1.200" fill="url(#pg)" stroke="#8f8f8f"/><path d="M2 4.500h5" stroke="#3557a8" stroke-width="1.100"/><path d="M4.500 2v5" stroke="#3557a8" stroke-width="1.100"/></svg>
<div class="a" style="left:25px;top:892px;width:6px;height:1px;background-image:linear-gradient(90deg,#8a8a8a 50%,transparent 50%);background-size:2px 1px"></div>
<svg class="a" style="left:32px;top:889px" width="12" height="7" viewBox="0 0 12 7"><path d="M0 0h5l1.600 2h5.400v3h-5.400l-1.600 2h-5z" fill="#000"/></svg>
<div class="t r16" style="left:50px;top:884px">nios_system_rh_temp_drdy_n_external_connection</div>
<svg class="a" style="left:15px;top:904px" width="9" height="9" viewBox="0 0 9 9"><rect x=".5" y=".5" width="8" height="8" rx="1.200" fill="url(#pg)" stroke="#8f8f8f"/><path d="M2 4.500h5" stroke="#3557a8" stroke-width="1.100"/><path d="M4.500 2v5" stroke="#3557a8" stroke-width="1.100"/></svg>
<div class="a" style="left:25px;top:908px;width:6px;height:1px;background-image:linear-gradient(90deg,#8a8a8a 50%,transparent 50%);background-size:2px 1px"></div>
<svg class="a" style="left:32px;top:905px" width="12" height="7" viewBox="0 0 12 7"><path d="M0 0h5l1.600 2h5.400v3h-5.400l-1.600 2h-5z" fill="#000"/></svg>
<div class="t r16" style="left:50px;top:900px">nios_system_rh_temp_i2c_opencores_export</div>
<svg class="a" style="left:15px;top:920px" width="9" height="9" viewBox="0 0 9 9"><rect x=".5" y=".5" width="8" height="8" rx="1.200" fill="url(#pg)" stroke="#8f8f8f"/><path d="M2 4.500h5" stroke="#3557a8" stroke-width="1.100"/><path d="M4.500 2v5" stroke="#3557a8" stroke-width="1.100"/></svg>
<div class="a" style="left:25px;top:924px;width:6px;height:1px;background-image:linear-gradient(90deg,#8a8a8a 50%,transparent 50%);background-size:2px 1px"></div>
<svg class="a" style="left:32px;top:921px" width="12" height="7" viewBox="0 0 12 7"><path d="M0 0h5l1.600 2h5.400v3h-5.400l-1.600 2h-5z" fill="#000"/></svg>
<div class="t r16" style="left:50px;top:916px">reset</div>
<svg class="a" style="left:15px;top:936px" width="9" height="9" viewBox="0 0 9 9"><rect x=".5" y=".5" width="8" height="8" rx="1.200" fill="url(#pg)" stroke="#8f8f8f"/><path d="M2 4.500h5" stroke="#3557a8" stroke-width="1.100"/><path d="M4.500 2v5" stroke="#3557a8" stroke-width="1.100"/></svg>
<div class="a" style="left:25px;top:940px;width:6px;height:1px;background-image:linear-gradient(90deg,#8a8a8a 50%,transparent 50%);background-size:2px 1px"></div>
<svg class="a" style="left:31px;top:936px" width="15" height="9" viewBox="0 0 15 9"><path d="M0 2.700h4M0 6.300h4M11 2.700h4M11 6.300h4" stroke="#000" stroke-width="1.500"/><rect x="3.700" y=".7" width="7.600" height="7.600" fill="#c0c0c0" stroke="#000" stroke-width="1.400"/></svg>
<div class="a" style="left:50px;top:932px;width:28px;height:16px;background:#0078d7"></div>
<div class="t r16" style="left:51px;top:932px;color:#fff">clk_0</div>
<svg class="a" style="left:15px;top:952px" width="9" height="9" viewBox="0 0 9 9"><rect x=".5" y=".5" width="8" height="8" rx="1.200" fill="url(#pg)" stroke="#8f8f8f"/><path d="M2 4.500h5" stroke="#3557a8" stroke-width="1.100"/><path d="M4.500 2v5" stroke="#3557a8" stroke-width="1.100"/></svg>
<div class="a" style="left:25px;top:956px;width:6px;height:1px;background-image:linear-gradient(90deg,#8a8a8a 50%,transparent 50%);background-size:2px 1px"></div>
<svg class="a" style="left:31px;top:949px" width="14" height="14" viewBox="0 0 14 14"><rect x=".5" y="2.500" width="3" height="7" fill="#dcdcdc" stroke="#000"/><rect x="4" y="4" width="1.500" height="2" fill="#000"/><rect x="5.500" y="1.500" width="8" height="8" fill="#c0c0c0" stroke="#000"/><path d="M6.500 8.500v-6h6" fill="none" stroke="#d9d9d9"/><path d="M7 1.500L7.500 .4h1.200L9.200 1.500z" fill="#000" stroke="#000" stroke-width=".6"/><rect x="9.300" y="10" width="2.200" height="1.500" fill="#000"/><rect x="2.500" y="11.500" width="11" height="2" fill="#dcdcdc" stroke="#000"/></svg>
<div class="t mb r16" style="left:50px;top:950px">hps_system [soc_system.qsys]</div>
<svg class="a" style="left:15px;top:968px" width="9" height="9" viewBox="0 0 9 9"><rect x=".5" y=".5" width="8" height="8" rx="1.200" fill="url(#pg)" stroke="#8f8f8f"/><path d="M2 4.500h5" stroke="#3557a8" stroke-width="1.100"/><path d="M4.500 2v5" stroke="#3557a8" stroke-width="1.100"/></svg>
<div class="a" style="left:25px;top:972px;width:6px;height:1px;background-image:linear-gradient(90deg,#8a8a8a 50%,transparent 50%);background-size:2px 1px"></div>
<svg class="a" style="left:31px;top:965px" width="14" height="14" viewBox="0 0 14 14"><rect x=".5" y="2.500" width="3" height="7" fill="#dcdcdc" stroke="#000"/><rect x="4" y="4" width="1.500" height="2" fill="#000"/><rect x="5.500" y="1.500" width="8" height="8" fill="#c0c0c0" stroke="#000"/><path d="M6.500 8.500v-6h6" fill="none" stroke="#d9d9d9"/><path d="M7 1.500L7.500 .4h1.200L9.200 1.500z" fill="#000" stroke="#000" stroke-width=".6"/><rect x="9.300" y="10" width="2.200" height="1.500" fill="#000"/><rect x="2.500" y="11.500" width="11" height="2" fill="#dcdcdc" stroke="#000"/></svg>
<div class="t mb r16" style="left:50px;top:966px">nios_system [nios_qsys.qsys]</div>
<svg class="a" style="left:15px;top:984px" width="9" height="9" viewBox="0 0 9 9"><rect x=".5" y=".5" width="8" height="8" rx="1.200" fill="url(#pg)" stroke="#8f8f8f"/><path d="M2 4.500h5" stroke="#3557a8" stroke-width="1.100"/><path d="M4.500 2v5" stroke="#3557a8" stroke-width="1.100"/></svg>
<div class="a" style="left:25px;top:988px;width:6px;height:1px;background-image:linear-gradient(90deg,#8a8a8a 50%,transparent 50%);background-size:2px 1px"></div>
<svg class="a" style="left:31px;top:982px" width="14" height="12" viewBox="0 0 14 12"><path d="M0 0h6v2h8v10H0z" fill="#ff9800"/></svg>
<div class="t r16" style="left:50px;top:980px">Connections</div>
<div class="panel" style="left:429px;top:57px;width:1472px;height:705px"></div>
<div class="tabsel" style="left:430px;top:58px;width:145px;height:26px"></div>
<div class="a" style="left:575px;top:83px;width:1325px;height:1px;background:#555"></div>
<div class="a" style="left:575px;top:58px;width:1px;height:26px;background:#444"></div>
<svg class="a" style="left:437px;top:62px" width="18" height="18" viewBox="0 0 18 18"><path d="M3 3.5v10" stroke="#34495e" stroke-width="1.6"/><circle cx="3" cy="3.5" r="2.6" fill="#34495e"/><circle cx="3" cy="13.5" r="2.6" fill="#34495e"/><path d="M5 3.5h11M5 13.5h10" stroke="#34495e" stroke-width="1"/><path d="M14 1.8L16 3.5L14 5.2" fill="none" stroke="#34495e" stroke-width=".9"/><path d="M13.5 11.3l3 2.2l-3 2.2z" fill="#34495e"/><path d="M9 1v16" stroke="#a9c4e8" stroke-width="1"/><path d="M10 8.5h6" stroke="#a9c4e8" stroke-width="1.2"/><path d="M14 6.7l2.6 1.8l-2.6 1.8z" fill="#a9c4e8"/><rect x="7" y="6.5" width="4" height="4" fill="#fff" stroke="#a9c4e8"/></svg>
<div class="t" style="left:459px;top:63px;height:16px;line-height:16px">System Contents</div>
<svg class="a" style="left:557px;top:65px" width="11" height="11" viewBox="0 0 11 11"><path d="M5.50 3.38L7.13 1.75A1.5 1.5 0 0 1 9.25 3.87L7.62 5.50L7.62 5.50L9.25 7.13A1.5 1.5 0 0 1 7.13 9.25L5.50 7.62L5.50 7.62L3.87 9.25A1.5 1.5 0 0 1 1.75 7.13L3.38 5.50L3.38 5.50L1.75 3.87A1.5 1.5 0 0 1 3.87 1.75L5.50 3.38Z" fill="rgba(255,255,255,.22)" stroke="#50545a" stroke-width=".9"/></svg>
<div class="t" style="left:586px;top:63px;height:16px;line-height:16px">Address Map</div>
<svg class="a" style="left:664px;top:65px" width="11" height="11" viewBox="0 0 11 11"><path d="M5.50 3.38L7.13 1.75A1.5 1.5 0 0 1 9.25 3.87L7.62 5.50L7.62 5.50L9.25 7.13A1.5 1.5 0 0 1 7.13 9.25L5.50 7.62L5.50 7.62L3.87 9.25A1.5 1.5 0 0 1 1.75 7.13L3.38 5.50L3.38 5.50L1.75 3.87A1.5 1.5 0 0 1 3.87 1.75L5.50 3.38Z" fill="rgba(255,255,255,.22)" stroke="#50545a" stroke-width=".9"/></svg>
<div class="a" style="left:681px;top:58px;width:1px;height:26px;background:#444"></div>
<div class="t" style="left:692px;top:63px;height:16px;line-height:16px">Interconnect Requirements</div>
<svg class="a" style="left:838px;top:65px" width="11" height="11" viewBox="0 0 11 11"><path d="M5.50 3.38L7.13 1.75A1.5 1.5 0 0 1 9.25 3.87L7.62 5.50L7.62 5.50L9.25 7.13A1.5 1.5 0 0 1 7.13 9.25L5.50 7.62L5.50 7.62L3.87 9.25A1.5 1.5 0 0 1 1.75 7.13L3.38 5.50L3.38 5.50L1.75 3.87A1.5 1.5 0 0 1 3.87 1.75L5.50 3.38Z" fill="rgba(255,255,255,.22)" stroke="#50545a" stroke-width=".9"/></svg>
<div class="a" style="left:856px;top:58px;width:1px;height:26px;background:#444"></div>
<svg class="a" style="left:1846px;top:65px" width="54" height="16" viewBox="0 0 54 16" overflow="visible"><rect x="0" y="9" width="8" height="2" fill="#000"/><rect x="17.650" y="4.650" width="9.700" height="7.400" fill="none" stroke="#000" stroke-width="1.300"/><rect x="17" y="4" width="11" height="2.400" fill="#000"/><path d="M24.600 4.200V1.400H29.500" fill="none" stroke="#000" stroke-width="1.200"/><path d="M28.800 -.7L31.400 1.400L28.800 3.500Z" fill="#000"/><rect x="38.650" y="3.650" width="10.700" height="7.700" fill="none" stroke="#000" stroke-width="1.300"/><rect x="38" y="3" width="12" height="3" fill="#000"/></svg>
<div class="a" style="left:462px;top:89px;width:18px;height:18px;background:#cdcdcd;border:1px solid #c3c3c3"></div>
<div class="a" style="left:486px;top:89px;width:18px;height:18px;background:#cdcdcd;border:1px solid #c3c3c3"></div>
<div class="a" style="left:510px;top:89px;width:18px;height:18px;background:#cdcdcd;border:1px solid #c3c3c3"></div>
<svg class="a" style="left:466px;top:93px" width="10" height="10" viewBox="0 0 10 10"><rect x="1" y="1" width="8" height="1.6" fill="#aaa"/><path d="M5 3.2l4 4.3H1z" fill="#aaa"/></svg>
<svg class="a" style="left:490px;top:93px" width="10" height="10" viewBox="0 0 10 10"><path d="M5 2.5l4 4.5H1z" fill="#aaa"/></svg>
<svg class="a" style="left:512px;top:91px" width="14" height="14" viewBox="0 0 14 14"><rect x="0" y="4" width="4" height="6" fill="#aaa"/><rect x="3" y="1" width="10" height="9" fill="#a3a3a3"/><rect x="4" y="11" width="9" height="2.5" fill="#aaa"/><path d="M13 12l-3-3" stroke="#999" stroke-width="2"/></svg>
<div class="t hb r16" style="left:533px;top:90px">System:</div><div class="t r16" style="left:583px;top:90px">top_qsys</div><div class="t hb r16" style="left:640px;top:90px">Path:</div><div class="t r16" style="left:672px;top:90px">clk_0</div>
<svg class="a" style="left:438px;top:114px" width="17" height="170" viewBox="0 0 17 170"><path d="M8 2.5v11.5M2.2 8.2h11.6" stroke="#0ebd4c" stroke-width="3.8"/><rect x="1" y="26" width="4" height="7" fill="#b0b0b0"/><rect x="4" y="33.5" width="10" height="3" fill="#bdbdbd"/><rect x="5" y="23" width="10" height="10" fill="#0a9cf5"/><rect x="8.5" y="21.5" width="2" height="2" fill="#0a5cc0"/><circle cx="12.8" cy="33.8" r="3.3" fill="#10b848"/><path d="M12.8 31.8v4M10.8 33.8h4" stroke="#fff" stroke-width="1.1"/><path d="M2.5 45l11 11M13.500 45l-11 11" stroke="#f0222a" stroke-width="1.7"/><rect x=".8" y="64.5" width="14.4" height="12.6" fill="#fff" stroke="#1c4fae" stroke-width="1.3"/><rect x=".2" y="63.8" width="15.6" height="2.6" fill="#1c4fae"/><path d="M3 69.5h2M6.500 69.5h4M3 73.5h2M6.500 73.5h3" stroke="#3b8fe8" stroke-width="1.2"/><path d="M7 76.500l7-7" stroke="#f5a21b" stroke-width="3"/><path d="M13 69l2-2" stroke="#e8453c" stroke-width="3"/><path d="M6 77.800l1.600-.6" stroke="#333" stroke-width="1.2"/><rect x="1.800" y="93.600" width="12.200" height="2.400" fill="#999"/><path d="M7.900 96l6.100 6h-12.200z" fill="#999"/><path d="M7.900 114.600l6.100 6.400h-12.200z" fill="#999"/><path d="M7.900 142l6.100-7h-12.200z" fill="#139bf0"/><path d="M7.900 161.600l6.100-6.600h-12.200z" fill="#139bf0"/><rect x="1.800" y="161.700" width="12.200" height="2.400" fill="#139bf0"/></svg>
<div class="a" style="left:461px;top:112px;width:1435px;height:620px;background:#fff;border:1px solid #828790"></div>
<div class="a" style="left:462px;top:138px;width:1416px;height:90px;background:#ededed"></div>
<div class="a" style="left:462px;top:516px;width:1416px;height:198px;background:#ededed"></div>
<div class="a" style="left:462px;top:138px;width:1416px;height:18px;background:#0078d7"></div>
<div class="t" style="left:467px;top:117px;height:18px;line-height:18px">Use</div>
<div class="t" style="left:504px;top:117px;height:18px;line-height:18px">Connections</div>
<div class="t" style="left:599px;top:117px;height:18px;line-height:18px">Name</div>
<div class="t" style="left:871px;top:117px;height:18px;line-height:18px">Description</div>
<div class="t" style="left:1071px;top:117px;height:18px;line-height:18px">Export</div>
<div class="t" style="left:1221px;top:117px;height:18px;line-height:18px">Clock</div>
<div class="t" style="left:1296px;top:117px;height:18px;line-height:18px">Base</div>
<div class="t" style="left:1451px;top:117px;height:18px;line-height:18px">End</div>
<div class="t" style="left:1586px;top:117px;height:18px;line-height:18px">IRQ</div>
<div class="t" style="left:1620px;top:117px;height:18px;line-height:18px">Tags</div>
<div class="t" style="left:1770px;top:117px;height:18px;line-height:18px">Opcode Name</div>
<div class="a" style="left:499px;top:113px;width:1px;height:25px;background:#e3e3e3"></div>
<div class="vsep" style="left:499px;top:138px;height:576px"></div>
<div class="a" style="left:594px;top:113px;width:1px;height:25px;background:#e3e3e3"></div>
<div class="vsep" style="left:594px;top:138px;height:576px"></div>
<div class="a" style="left:866px;top:113px;width:1px;height:25px;background:#e3e3e3"></div>
<div class="vsep" style="left:866px;top:138px;height:576px"></div>
<div class="a" style="left:1066px;top:113px;width:1px;height:25px;background:#e3e3e3"></div>
<div class="vsep" style="left:1066px;top:138px;height:576px"></div>
<div class="a" style="left:1216px;top:113px;width:1px;height:25px;background:#e3e3e3"></div>
<div class="vsep" style="left:1216px;top:138px;height:576px"></div>
<div class="a" style="left:1291px;top:113px;width:1px;height:25px;background:#e3e3e3"></div>
<div class="vsep" style="left:1291px;top:138px;height:576px"></div>
<div class="a" style="left:1446px;top:113px;width:1px;height:25px;background:#e3e3e3"></div>
<div class="vsep" style="left:1446px;top:138px;height:576px"></div>
<div class="a" style="left:1581px;top:113px;width:1px;height:25px;background:#e3e3e3"></div>
<div class="vsep" style="left:1581px;top:138px;height:576px"></div>
<div class="a" style="left:1615px;top:113px;width:1px;height:25px;background:#e3e3e3"></div>
<div class="vsep" style="left:1615px;top:138px;height:576px"></div>
<div class="a" style="left:1765px;top:113px;width:1px;height:25px;background:#e3e3e3"></div>
<div class="vsep" style="left:1765px;top:138px;height:576px"></div>
<div class="a" style="left:1878px;top:113px;width:1px;height:25px;background:#e3e3e3"></div>
<svg class="a" style="left:474px;top:141px" width="13" height="13" viewBox="0 0 13 13"><rect x=".5" y=".5" width="12" height="12" fill="#fff" stroke="#333"/><path d="M2.400 6.500l2.700 2.900l5.600-5.900" fill="none" stroke="#333" stroke-width="1.400"/></svg>
<svg class="a" style="left:600px;top:143px" width="9" height="9" viewBox="0 0 9 9"><rect x=".5" y=".5" width="8" height="8" fill="#fff" stroke="#000"/><path d="M2 4.500h5" stroke="#000" stroke-width="1.100"/></svg>
<div class="t b r18" style="left:617px;top:138px;color:#fff">clk_0</div>
<div class="t r18" style="left:867px;top:138px;color:#fff">Clock Source</div>
<div class="t r18" style="left:624px;top:156px">clk_in</div>
<div class="t r18" style="left:867px;top:156px;color:#000">Clock Input</div>
<div class="t b r18" style="left:1068px;top:156px">clk</div>
<div class="t b i r18" style="left:1219px;top:156px">exported</div>
<div class="t r18" style="left:624px;top:174px">clk_in_reset</div>
<div class="t r18" style="left:867px;top:174px;color:#000">Reset Input</div>
<div class="t b r18" style="left:1068px;top:174px">reset</div>
<div class="t r18" style="left:624px;top:192px">clk</div>
<div class="t r18" style="left:867px;top:192px;color:#000">Clock Output</div>
<div class="t dc r18" style="left:1080px;top:192px">Double-click to export</div>
<div class="t r18" style="left:1218px;top:192px">clk_0</div>
<div class="t r18" style="left:624px;top:210px">clk_reset</div>
<div class="t r18" style="left:867px;top:210px;color:#000">Reset Output</div>
<div class="t dc r18" style="left:1080px;top:210px">Double-click to export</div>
<svg class="a" style="left:474px;top:231px" width="13" height="13" viewBox="0 0 13 13"><rect x=".5" y=".5" width="12" height="12" fill="#fff" stroke="#333"/><path d="M2.400 6.500l2.700 2.900l5.600-5.900" fill="none" stroke="#333" stroke-width="1.400"/></svg>
<svg class="a" style="left:600px;top:233px" width="9" height="9" viewBox="0 0 9 9"><rect x=".5" y=".5" width="8" height="8" fill="#fff" stroke="#000"/><path d="M2 4.500h5" stroke="#000" stroke-width="1.100"/></svg>
<svg class="a" style="left:613px;top:230px" width="14" height="14" viewBox="0 0 14 14"><rect x=".5" y="2.500" width="3" height="7" fill="#dcdcdc" stroke="#000"/><rect x="4" y="4" width="1.500" height="2" fill="#000"/><rect x="5.500" y="1.500" width="8" height="8" fill="#c0c0c0" stroke="#000"/><path d="M6.500 8.500v-6h6" fill="none" stroke="#d9d9d9"/><path d="M7 1.500L7.500 .4h1.200L9.200 1.500z" fill="#000" stroke="#000" stroke-width=".6"/><rect x="9.300" y="10" width="2.200" height="1.500" fill="#000"/><rect x="2.500" y="11.500" width="11" height="2" fill="#dcdcdc" stroke="#000"/></svg>
<div class="t hb r18" style="left:632px;top:228px">hps_system</div>
<div class="t r18" style="left:867px;top:228px;color:#000">soc_system</div>
<div class="t r18" style="left:624px;top:246px">button_pio_external_connection</div>
<div class="t r18" style="left:867px;top:246px;color:#000">Conduit</div>
<div class="t b r18" style="left:1068px;top:246px">hps_system_button_pio...</div>
<div class="t r18" style="left:624px;top:264px">clk</div>
<div class="t r18" style="left:867px;top:264px;color:#000">Clock Input</div>
<div class="t dc r18" style="left:1080px;top:264px">Double-click to export</div>
<div class="t b r18" style="left:1218px;top:264px">clk_0</div>
<div class="t r18" style="left:624px;top:282px">dipsw_pio_external_connection</div>
<div class="t r18" style="left:867px;top:282px;color:#000">Conduit</div>
<div class="t b r18" style="left:1068px;top:282px">hps_system_dipsw_pio...</div>
<div class="t r18" style="left:624px;top:300px">hps_0_f2h_cold_reset_req</div>
<div class="t r18" style="left:867px;top:300px;color:#000">Reset Input</div>
<div class="t b r18" style="left:1068px;top:300px">hps_system_hps_0_f2h...</div>
<div class="t r18" style="left:624px;top:318px">hps_0_f2h_debug_reset_req</div>
<div class="t r18" style="left:867px;top:318px;color:#000">Reset Input</div>
<div class="t b r18" style="left:1068px;top:318px">hps_system_hps_0_f2h...</div>
<div class="t r18" style="left:624px;top:336px">hps_0_f2h_stm_hw_events</div>
<div class="t r18" style="left:867px;top:336px;color:#000">Conduit</div>
<div class="t b r18" style="left:1068px;top:336px">hps_system_hps_0_f2h...</div>
<div class="t r18" style="left:624px;top:354px">hps_0_f2h_warm_reset_req</div>
<div class="t r18" style="left:867px;top:354px;color:#000">Reset Input</div>
<div class="t b r18" style="left:1068px;top:354px">hps_system_hps_0_f2h...</div>
<div class="t r18" style="left:624px;top:372px">hps_0_h2f_reset</div>
<div class="t r18" style="left:867px;top:372px;color:#000">Reset Output</div>
<div class="t b r18" style="left:1068px;top:372px">hps_system_hps_0_h2f...</div>
<div class="t r18" style="left:624px;top:390px">hps_0_hps_io</div>
<div class="t r18" style="left:867px;top:390px;color:#000">Conduit</div>
<div class="t b r18" style="left:1068px;top:390px">hps_io</div>
<div class="t r18" style="left:624px;top:408px">led_pio_external_connection</div>
<div class="t r18" style="left:867px;top:408px;color:#000">Conduit</div>
<div class="t b r18" style="left:1068px;top:408px">hps_system_led_pio_ex...</div>
<div class="t r18" style="left:624px;top:426px">memory</div>
<div class="t r18" style="left:867px;top:426px;color:#000">Conduit</div>
<div class="t b r18" style="left:1068px;top:426px">memory</div>
<div class="t r18" style="left:624px;top:444px">nios2_resetreq_pio_external_connection</div>
<div class="t r18" style="left:867px;top:444px;color:#000">Conduit</div>
<div class="t b r18" style="left:1068px;top:444px">hps_system_nios2_rese...</div>
<div class="t r18" style="left:624px;top:462px">nios2_resettaken_pio_external_connection</div>
<div class="t r18" style="left:867px;top:462px;color:#000">Conduit</div>
<div class="t b r18" style="left:1068px;top:462px">hps_system_nios2_rese...</div>
<div class="t r18" style="left:624px;top:480px">reset</div>
<div class="t r18" style="left:867px;top:480px;color:#000">Reset Input</div>
<div class="t dc r18" style="left:1080px;top:480px">Double-click to export</div>
<div class="t r18" style="left:624px;top:498px">shared_mem_bridge_m0</div>
<div class="t r18" style="left:867px;top:498px;color:#000">Avalon Memory Mapped Master</div>
<div class="t dc r18" style="left:1080px;top:498px">Double-click to export</div>
<div class="t r18" style="left:1218px;top:498px">[clk]</div>
<svg class="a" style="left:474px;top:519px" width="13" height="13" viewBox="0 0 13 13"><rect x=".5" y=".5" width="12" height="12" fill="#fff" stroke="#333"/><path d="M2.400 6.500l2.700 2.900l5.600-5.900" fill="none" stroke="#333" stroke-width="1.400"/></svg>
<svg class="a" style="left:600px;top:521px" width="9" height="9" viewBox="0 0 9 9"><rect x=".5" y=".5" width="8" height="8" fill="#fff" stroke="#000"/><path d="M2 4.500h5" stroke="#000" stroke-width="1.100"/></svg>
<svg class="a" style="left:613px;top:518px" width="14" height="14" viewBox="0 0 14 14"><rect x=".5" y="2.500" width="3" height="7" fill="#dcdcdc" stroke="#000"/><rect x="4" y="4" width="1.500" height="2" fill="#000"/><rect x="5.500" y="1.500" width="8" height="8" fill="#c0c0c0" stroke="#000"/><path d="M6.500 8.500v-6h6" fill="none" stroke="#d9d9d9"/><path d="M7 1.500L7.500 .4h1.200L9.200 1.500z" fill="#000" stroke="#000" stroke-width=".6"/><rect x="9.300" y="10" width="2.200" height="1.500" fill="#000"/><rect x="2.500" y="11.500" width="11" height="2" fill="#dcdcdc" stroke="#000"/></svg>
<div class="t hb r18" style="left:632px;top:516px">nios_system</div>
<div class="t r18" style="left:867px;top:516px;color:#000">nios_qsys</div>
<div class="t r18" style="left:624px;top:534px">clk</div>
<div class="t r18" style="left:867px;top:534px;color:#000">Clock Input</div>
<div class="t dc r18" style="left:1080px;top:534px">Double-click to export</div>
<div class="t b r18" style="left:1218px;top:534px">clk_0</div>
<div class="t r18" style="left:624px;top:552px">led_pio</div>
<div class="t r18" style="left:867px;top:552px;color:#000">Conduit</div>
<div class="t b r18" style="left:1068px;top:552px">nios_system_led_pio</div>
<div class="t r18" style="left:624px;top:570px">light_i2c_opencores_export</div>
<div class="t r18" style="left:867px;top:570px;color:#000">Conduit</div>
<div class="t b r18" style="left:1068px;top:570px">nios_system_light_i2c_...</div>
<div class="t r18" style="left:624px;top:588px">light_int_external_connection</div>
<div class="t r18" style="left:867px;top:588px;color:#000">Conduit</div>
<div class="t b r18" style="left:1068px;top:588px">nios_system_light_int_...</div>
<div class="t r18" style="left:624px;top:606px">mm_bridge_for_hps_s0</div>
<div class="t r18" style="left:867px;top:606px;color:#000">Avalon Memory Mapped Slave</div>
<div class="t dc r18" style="left:1080px;top:606px">Double-click to export</div>
<div class="t r18" style="left:1218px;top:606px">[clk]</div>
<div class="t r18" style="left:624px;top:624px">mpu_i2c_opencores_export</div>
<div class="t r18" style="left:867px;top:624px;color:#000">Conduit</div>
<div class="t b r18" style="left:1068px;top:624px">nios_system_mpu_i2c_...</div>
<div class="t r18" style="left:624px;top:642px">mpu_int_external_connection</div>
<div class="t r18" style="left:867px;top:642px;color:#000">Conduit</div>
<div class="t b r18" style="left:1068px;top:642px">nios_system_mpu_int_...</div>
<div class="t r18" style="left:624px;top:660px">nios2_gen2_cpu_resetrequest_conduit</div>
<div class="t r18" style="left:867px;top:660px;color:#000">Conduit</div>
<div class="t b r18" style="left:1068px;top:660px">nios_system_nios2_gen...</div>
<div class="t r18" style="left:624px;top:678px">reset</div>
<div class="t r18" style="left:867px;top:678px;color:#000">Reset Input</div>
<div class="t dc r18" style="left:1080px;top:678px">Double-click to export</div>
<div class="t r18" style="left:624px;top:696px">rh_temp_drdy_n_external_connection</div>
<div class="t r18" style="left:867px;top:696px;color:#000">Conduit</div>
<div class="t b r18" style="left:1068px;top:696px">nios_system_rh_temp_...</div>
<svg class="a" style="left:1295px;top:611px" width="9" height="9" viewBox="0 0 9 9"><rect x="0" y="4" width="6" height="5" fill="#c8c8c8"/><path d="M4.500 4V2.200a1.600 1.600 0 0 1 3.200 0V3" fill="none" stroke="#c8c8c8" stroke-width="1.1"/></svg>
<div class="t m r18" style="left:1314px;top:607px;-webkit-text-stroke:.22px #000">0x0000_0000</div>
<div class="t m r18" style="left:1448px;top:607px;color:#222">0x0003_ffff</div>
<svg class="a" style="left:499px;top:138px" width="96" height="576" viewBox="0 0 96 576" fill="none"><g stroke="#b4b4b4" stroke-width="1"><path d="M40.5 44V236.5q0 6 6 6M40.5 548V248.5q0 -6 6 -6H80"/><path d="M40.5 44.5H80"/><path d="M72.5 116V576"/><path d="M24.5 170.5H80"/><path d="M24.5 188.5H80"/><path d="M24.5 224.5H80"/><path d="M72.5 116.5H82"/><path d="M72.5 152.5H82"/><path d="M72.5 206.5H82"/><path d="M72.5 260.5H82"/><path d="M72.5 278.5H82"/><path d="M72.5 296.5H82"/><path d="M72.5 314.5H82"/><path d="M72.5 332.5H82"/><path d="M72.5 422.5H82"/><path d="M72.5 440.5H82"/><path d="M72.5 458.5H82"/><path d="M72.5 494.5H82"/><path d="M72.5 512.5H82"/><path d="M72.5 530.5H82"/><path d="M72.5 566.5H82"/></g><path d="M37.2 44.5L40.5 41.2L43.8 44.5L40.5 47.8Z" fill="#fff" stroke="#b2b2b2" stroke-width="1.200"/><path d="M21.2 170.5L24.5 167.2L27.8 170.5L24.5 173.8Z" fill="#fff" stroke="#b2b2b2" stroke-width="1.200"/><path d="M37.2 170.5L40.5 167.2L43.8 170.5L40.5 173.8Z" fill="#fff" stroke="#b2b2b2" stroke-width="1.200"/><path d="M21.2 188.5L24.5 185.2L27.8 188.5L24.5 191.8Z" fill="#fff" stroke="#b2b2b2" stroke-width="1.200"/><path d="M37.2 188.5L40.5 185.2L43.8 188.5L40.5 191.8Z" fill="#fff" stroke="#b2b2b2" stroke-width="1.200"/><path d="M21.2 224.5L24.5 221.2L27.8 224.5L24.5 227.8Z" fill="#fff" stroke="#b2b2b2" stroke-width="1.200"/><path d="M37.2 224.5L40.5 221.2L43.8 224.5L40.5 227.8Z" fill="#fff" stroke="#b2b2b2" stroke-width="1.200"/><path d="M69.2 116.5L72.5 113.2L75.8 116.5L72.5 119.8Z" fill="#fff" stroke="#b2b2b2" stroke-width="1.200"/><path d="M69.2 152.5L72.5 149.2L75.8 152.5L72.5 155.8Z" fill="#fff" stroke="#b2b2b2" stroke-width="1.200"/><path d="M69.2 206.5L72.5 203.2L75.8 206.5L72.5 209.8Z" fill="#fff" stroke="#b2b2b2" stroke-width="1.200"/><path d="M69.2 260.5L72.5 257.2L75.8 260.5L72.5 263.8Z" fill="#fff" stroke="#b2b2b2" stroke-width="1.200"/><path d="M69.2 278.5L72.5 275.2L75.8 278.5L72.5 281.8Z" fill="#fff" stroke="#b2b2b2" stroke-width="1.200"/><path d="M69.2 296.5L72.5 293.2L75.8 296.5L72.5 299.8Z" fill="#fff" stroke="#b2b2b2" stroke-width="1.200"/><path d="M69.2 314.5L72.5 311.2L75.8 314.5L72.5 317.8Z" fill="#fff" stroke="#b2b2b2" stroke-width="1.200"/><path d="M69.2 332.5L72.5 329.2L75.8 332.5L72.5 335.8Z" fill="#fff" stroke="#b2b2b2" stroke-width="1.200"/><path d="M69.2 422.5L72.5 419.2L75.8 422.5L72.5 425.8Z" fill="#fff" stroke="#b2b2b2" stroke-width="1.200"/><path d="M69.2 440.5L72.5 437.2L75.8 440.5L72.5 443.8Z" fill="#fff" stroke="#b2b2b2" stroke-width="1.200"/><path d="M69.2 458.5L72.5 455.2L75.8 458.5L72.5 461.8Z" fill="#fff" stroke="#b2b2b2" stroke-width="1.200"/><path d="M69.2 494.5L72.5 491.2L75.8 494.5L72.5 497.8Z" fill="#fff" stroke="#b2b2b2" stroke-width="1.200"/><path d="M69.2 512.5L72.5 509.2L75.8 512.5L72.5 515.8Z" fill="#fff" stroke="#b2b2b2" stroke-width="1.200"/><path d="M69.2 530.5L72.5 527.2L75.8 530.5L72.5 533.8Z" fill="#fff" stroke="#b2b2b2" stroke-width="1.200"/><path d="M69.2 566.5L72.5 563.2L75.8 566.5L72.5 569.8Z" fill="#fff" stroke="#b2b2b2" stroke-width="1.200"/><path d="M37.2 350.5L40.5 347.2L43.8 350.5L40.5 353.8Z" fill="#fff" stroke="#b2b2b2" stroke-width="1.200"/><path d="M37.2 548.5L40.5 545.2L43.8 548.5L40.5 551.8Z" fill="#fff" stroke="#b2b2b2" stroke-width="1.200"/><g stroke="#000" stroke-width="1.400"><path d="M8.5 404V67.5q0 -5 5 -5H90"/><path d="M24.5 548V85.5q0 -5 5 -5H90"/><path d="M56.5 476V373.5q0 -5 5 -5H90"/><path d="M93.500 59L90 62.5L93.500 66" stroke-width="1"/><path d="M93.500 77L90 80.5L93.500 84" stroke-width="1"/><path d="M93.500 365L90 368.5L93.500 372" stroke-width="1"/><path d="M8.5 134.5H92.500"/><path d="M89.500 131.3L92.800 134.5L89.500 137.7" stroke-width="1"/><path d="M8.5 404.5H92.500"/><path d="M89.500 401.3L92.800 404.5L89.500 407.7" stroke-width="1"/><path d="M24.5 350.5H92.500"/><path d="M89.500 347.3L92.800 350.5L89.500 353.7" stroke-width="1"/><path d="M24.5 548.5H92.500"/><path d="M89.500 545.3L92.800 548.5L89.500 551.7" stroke-width="1"/><path d="M56.5 476.5H92.500"/><path d="M89.500 473.3L92.800 476.5L89.500 479.7" stroke-width="1"/></g><g stroke="#000" stroke-width="1.250"><path d="M80.500 23.7H86.500L89.500 26.5L86.500 29.3H80.500Z" fill="#fff"/><path d="M89.500 26.5H96"/><path d="M80.500 41.7H86.500L89.500 44.5L86.500 47.3H80.500Z" fill="#fff"/><path d="M89.500 44.5H96"/><path d="M80.500 167.7H86.500L89.500 170.5L86.500 173.3H80.500Z" fill="#fff"/><path d="M89.500 170.5H96"/><path d="M80.500 185.7H86.500L89.500 188.5L86.500 191.3H80.500Z" fill="#fff"/><path d="M89.500 188.5H96"/><path d="M80.500 221.7H86.500L89.500 224.5L86.500 227.3H80.500Z" fill="#fff"/><path d="M89.500 224.5H96"/><path d="M89.500 239.7H83.500L80.500 242.5L83.500 245.3H89.500Z" fill="#fff"/><path d="M89.500 242.5H96"/><path d="M81.500 116.5L84.500 113.7H88.500L91.500 116.5L88.500 119.3H84.500Z" fill="#fff"/><path d="M91.500 116.5H96"/><path d="M81.500 152.5L84.500 149.7H88.500L91.500 152.5L88.500 155.3H84.500Z" fill="#fff"/><path d="M91.500 152.5H96"/><path d="M81.500 206.5L84.500 203.7H88.500L91.500 206.5L88.500 209.3H84.500Z" fill="#fff"/><path d="M91.500 206.5H96"/><path d="M81.500 260.5L84.500 257.7H88.500L91.500 260.5L88.500 263.3H84.500Z" fill="#fff"/><path d="M91.500 260.5H96"/><path d="M81.500 278.5L84.500 275.7H88.500L91.500 278.5L88.500 281.3H84.500Z" fill="#fff"/><path d="M91.500 278.5H96"/><path d="M81.500 296.5L84.500 293.7H88.500L91.500 296.5L88.500 299.3H84.500Z" fill="#fff"/><path d="M91.500 296.5H96"/><path d="M81.500 314.5L84.500 311.7H88.500L91.500 314.5L88.500 317.3H84.500Z" fill="#fff"/><path d="M91.500 314.5H96"/><path d="M81.500 332.5L84.500 329.7H88.500L91.500 332.5L88.500 335.3H84.500Z" fill="#fff"/><path d="M91.500 332.5H96"/><path d="M81.500 422.5L84.500 419.7H88.500L91.500 422.5L88.500 425.3H84.500Z" fill="#fff"/><path d="M91.500 422.5H96"/><path d="M81.500 440.5L84.500 437.7H88.500L91.500 440.5L88.500 443.3H84.500Z" fill="#fff"/><path d="M91.500 440.5H96"/><path d="M81.500 458.5L84.500 455.7H88.500L91.500 458.5L88.500 461.3H84.500Z" fill="#fff"/><path d="M91.500 458.5H96"/><path d="M81.500 494.5L84.500 491.7H88.500L91.500 494.5L88.500 497.3H84.500Z" fill="#fff"/><path d="M91.500 494.5H96"/><path d="M81.500 512.5L84.500 509.7H88.500L91.500 512.5L88.500 515.3H84.500Z" fill="#fff"/><path d="M91.500 512.5H96"/><path d="M81.500 530.5L84.500 527.7H88.500L91.500 530.5L88.500 533.3H84.500Z" fill="#fff"/><path d="M91.500 530.5H96"/><path d="M81.500 566.5L84.500 563.7H88.500L91.500 566.5L88.500 569.3H84.500Z" fill="#fff"/><path d="M91.500 566.5H96"/></g><circle cx="8.5" cy="134.5" r="3.600" fill="#000"/><circle cx="8.5" cy="404.5" r="3.600" fill="#000"/><circle cx="24.5" cy="350.5" r="3.600" fill="#000"/><circle cx="24.5" cy="548.5" r="3.600" fill="#000"/><circle cx="56.5" cy="476.5" r="3.600" fill="#000"/></svg>
<div class="a" style="left:1879px;top:113px;width:16px;height:25px;background:#f0f0f0"></div>
<div class="sb" style="left:1879px;top:138px;width:16px;height:576px"></div>
<div class="th" style="left:1879px;top:155px;width:15px;height:525px"></div>
<svg class="a" style="left:1882px;top:144px" width="10" height="7" viewBox="0 0 10 7"><path d="M1.400 5.800l3.600-3.900l3.600 3.900" fill="none" stroke="#555" stroke-width="2"/></svg>
<svg class="a" style="left:1882px;top:703px" width="10" height="7" viewBox="0 0 10 7"><path d="M1.400 1.200l3.600 3.900l3.600-3.900" fill="none" stroke="#555" stroke-width="2"/></svg>
<div class="sb" style="left:462px;top:714px;width:1433px;height:17px"></div>
<div class="th" style="left:479px;top:715px;width:1345px;height:15px"></div>
<svg class="a" style="left:466px;top:718px" width="7" height="10" viewBox="0 0 7 10"><path d="M5.800 1.400l-3.900 3.600l3.900 3.600" fill="none" stroke="#555" stroke-width="2"/></svg>
<svg class="a" style="left:1867px;top:718px" width="7" height="10" viewBox="0 0 7 10"><path d="M1.200 1.400l3.900 3.600l-3.900 3.600" fill="none" stroke="#555" stroke-width="2"/></svg>
<svg class="a" style="left:463px;top:738px" width="86" height="17" viewBox="0 0 86 17"><rect x="0" y="0" width="6" height="16" fill="#e2e2e0"/><rect x="6" y="0" width="10" height="16" fill="#fff"/><path d="M0 9.500h1.500V5.500h3.500v4h5.500v-2h1.500v2h1.500v-2.500h2.500" fill="none" stroke="#f0252b" stroke-width="1"/><rect x="7" y="0" width="2" height="16" fill="#0f3ba8"/><rect x="21" y="0" width="16" height="16" fill="#fff"/><path d="M21 11.500h3.500V3.500h9V11.500h3.500" fill="none" stroke="#f0252b" stroke-width="1"/><path d="M22.800 7.500l1.700-2.200l1.700 2.200zM31.800 6.800l1.700 2.200l1.700-2.200z" fill="#f0252b"/><rect x="28" y="0" width="2" height="16" fill="#0f3ba8"/><rect x="41" y="8" width="1" height="1" fill="#888"/><path d="M47 3.500h16l-6 7.500v2q0 1.500-2 1.500t-2-1.500v-2z" fill="#ff9800"/><ellipse cx="55" cy="3.800" rx="8" ry="1.700" fill="#ff9800"/><ellipse cx="55" cy="3.800" rx="5.500" ry=".8" fill="#ffd9a0"/><path d="M68 3.500h16l-6 7.500v2q0 1.500-2 1.500t-2-1.500v-2z" fill="#9b9b9b"/><ellipse cx="76" cy="3.800" rx="8" ry="1.700" fill="#9b9b9b"/><ellipse cx="76" cy="3.800" rx="5.500" ry=".8" fill="#d4d4d4"/><path d="M76 6l7.500 9" stroke="#8a8a8a" stroke-width="1.400"/></svg>
<div class="t hb r18" style="left:554px;top:738px;letter-spacing:0">Current filter:</div>
<div class="panel" style="left:429px;top:766px;width:1472px;height:233px"></div>
<div class="tabsel" style="left:430px;top:767px;width:110px;height:26px"></div>
<div class="a" style="left:540px;top:792px;width:1360px;height:1px;background:#555"></div>
<div class="a" style="left:540px;top:767px;width:1px;height:26px;background:#444"></div>
<svg class="a" style="left:438px;top:772px" width="15" height="15" viewBox="0 0 15 15"><path d="M.5 .5l6 6M6.500 .5l-6 6" stroke="#f0353b" stroke-width="1"/><circle cx="3.500" cy="11.500" r="3.400" fill="#0a9cf5"/><rect x="3" y="9.800" width="1.100" height="3.300" fill="#fff"/><path d="M9 2.500h5.300M9 4.500h5.300M9 6.500h5.300M9 10.500h5.300M9 12.500h5.300M9 14.500h5.300" stroke="#1a3fa8" stroke-width="1"/></svg>
<div class="t" style="left:459px;top:772px;height:16px;line-height:16px">Messages</div>
<svg class="a" style="left:523px;top:774px" width="11" height="11" viewBox="0 0 11 11"><path d="M5.50 3.38L7.13 1.75A1.5 1.5 0 0 1 9.25 3.87L7.62 5.50L7.62 5.50L9.25 7.13A1.5 1.5 0 0 1 7.13 9.25L5.50 7.62L5.50 7.62L3.87 9.25A1.5 1.5 0 0 1 1.75 7.13L3.38 5.50L3.38 5.50L1.75 3.87A1.5 1.5 0 0 1 3.87 1.75L5.50 3.38Z" fill="rgba(255,255,255,.22)" stroke="#50545a" stroke-width=".9"/></svg>
<svg class="a" style="left:1846px;top:774px" width="54" height="16" viewBox="0 0 54 16" overflow="visible"><rect x="0" y="9" width="8" height="2" fill="#000"/><rect x="17.650" y="4.650" width="9.700" height="7.400" fill="none" stroke="#000" stroke-width="1.300"/><rect x="17" y="4" width="11" height="2.400" fill="#000"/><path d="M24.600 4.200V1.400H29.500" fill="none" stroke="#000" stroke-width="1.200"/><path d="M28.800 -.7L31.400 1.400L28.800 3.500Z" fill="#000"/><rect x="38.650" y="3.650" width="10.700" height="7.700" fill="none" stroke="#000" stroke-width="1.300"/><rect x="38" y="3" width="12" height="3" fill="#000"/></svg>
<div class="a" style="left:432px;top:795px;width:1467px;height:201px;background:#fff;border:1px solid #828790"></div>
<div class="t" style="left:441px;top:800px;height:18px;line-height:18px">Type</div>
<div class="t" style="left:516px;top:800px;height:18px;line-height:18px">Path</div>
<div class="t" style="left:772px;top:800px;height:18px;line-height:18px">Message</div>
<div class="a" style="left:433px;top:820px;width:1447px;height:1px;background:#e8e8e8"></div>
<div class="a" style="left:507px;top:796px;width:1px;height:24px;background:#e3e3e3"></div>
<div class="vsep" style="left:507px;top:821px;height:156px"></div>
<div class="a" style="left:763px;top:796px;width:1px;height:24px;background:#e3e3e3"></div>
<div class="vsep" style="left:763px;top:821px;height:156px"></div>
<div class="hsep" style="left:433px;top:842px;width:1447px"></div>
<div class="hsep" style="left:433px;top:864px;width:1447px"></div>
<div class="hsep" style="left:433px;top:886px;width:1447px"></div>
<div class="hsep" style="left:433px;top:908px;width:1447px"></div>
<div class="hsep" style="left:433px;top:930px;width:1447px"></div>
<div class="hsep" style="left:433px;top:952px;width:1447px"></div>
<div class="hsep" style="left:433px;top:974px;width:1447px"></div>
<svg class="a" style="left:433px;top:826px" width="9" height="9" viewBox="0 0 9 9"><rect x=".5" y=".5" width="8" height="8" rx="1.200" fill="url(#pg)" stroke="#8a8a8a"/><path d="M2 4.500h5" stroke="#2a3f8f" stroke-width="1.100"/></svg>
<svg class="a" style="left:444px;top:824px" width="14" height="14" viewBox="0 0 14 14"><circle cx="7" cy="7" r="6.300" fill="url(#ig)" stroke="url(#is)" stroke-width="1.300"/><circle cx="7" cy="7" r="5.100" fill="none" stroke="#b9d3ef" stroke-width=".8"/><rect x="6.100" y="3.100" width="1.900" height="1.700" fill="#fff"/><path d="M5.500 5.800h2.500v3.700h1v1.100h-3.700v-1.100h1.100v-2.600h-.9z" fill="#fff"/></svg>
<div class="t g r22" style="left:510px;top:820px">13 Info Messages</div>
<svg class="a" style="left:453px;top:846px" width="14" height="14" viewBox="0 0 14 14"><circle cx="7" cy="7" r="6.300" fill="url(#ig)" stroke="url(#is)" stroke-width="1.300"/><circle cx="7" cy="7" r="5.100" fill="none" stroke="#b9d3ef" stroke-width=".8"/><rect x="6.100" y="3.100" width="1.900" height="1.700" fill="#fff"/><path d="M5.500 5.800h2.500v3.700h1v1.100h-3.700v-1.100h1.100v-2.600h-.9z" fill="#fff"/></svg>
<div class="t g b r22" style="left:510px;top:842px">top_qsys.hps_system.button_pio</div>
<div class="t g r22" style="left:765px;top:842px;letter-spacing:-.09px">PIO inputs are not hardwired in test bench. Undefined values will be read from PIO inputs during simulation.</div>
<svg class="a" style="left:453px;top:868px" width="14" height="14" viewBox="0 0 14 14"><circle cx="7" cy="7" r="6.300" fill="url(#ig)" stroke="url(#is)" stroke-width="1.300"/><circle cx="7" cy="7" r="5.100" fill="none" stroke="#b9d3ef" stroke-width=".8"/><rect x="6.100" y="3.100" width="1.900" height="1.700" fill="#fff"/><path d="M5.500 5.800h2.500v3.700h1v1.100h-3.700v-1.100h1.100v-2.600h-.9z" fill="#fff"/></svg>
<div class="t g b r22" style="left:510px;top:864px">top_qsys.hps_system.dipsw_pio</div>
<div class="t g r22" style="left:765px;top:864px;letter-spacing:-.09px">PIO inputs are not hardwired in test bench. Undefined values will be read from PIO inputs during simulation.</div>
<svg class="a" style="left:453px;top:890px" width="14" height="14" viewBox="0 0 14 14"><circle cx="7" cy="7" r="6.300" fill="url(#ig)" stroke="url(#is)" stroke-width="1.300"/><circle cx="7" cy="7" r="5.100" fill="none" stroke="#b9d3ef" stroke-width=".8"/><rect x="6.100" y="3.100" width="1.900" height="1.700" fill="#fff"/><path d="M5.500 5.800h2.500v3.700h1v1.100h-3.700v-1.100h1.100v-2.600h-.9z" fill="#fff"/></svg>
<div class="t g b r22" style="left:510px;top:886px">top_qsys.hps_system.hps_0</div>
<div class="t g r22" style="left:765px;top:886px;letter-spacing:-.09px">HPS Main PLL counter settings: n = 0 m = 63</div>
<svg class="a" style="left:453px;top:912px" width="14" height="14" viewBox="0 0 14 14"><circle cx="7" cy="7" r="6.300" fill="url(#ig)" stroke="url(#is)" stroke-width="1.300"/><circle cx="7" cy="7" r="5.100" fill="none" stroke="#b9d3ef" stroke-width=".8"/><rect x="6.100" y="3.100" width="1.900" height="1.700" fill="#fff"/><path d="M5.500 5.800h2.500v3.700h1v1.100h-3.700v-1.100h1.100v-2.600h-.9z" fill="#fff"/></svg>
<div class="t g b r22" style="left:510px;top:908px">top_qsys.hps_system.hps_0</div>
<div class="t g r22" style="left:765px;top:908px;letter-spacing:-.09px">HPS peripherial PLL counter settings: n = 0 m = 39</div>
<svg class="a" style="left:453px;top:934px" width="14" height="14" viewBox="0 0 14 14"><circle cx="7" cy="7" r="6.300" fill="url(#ig)" stroke="url(#is)" stroke-width="1.300"/><circle cx="7" cy="7" r="5.100" fill="none" stroke="#b9d3ef" stroke-width=".8"/><rect x="6.100" y="3.100" width="1.900" height="1.700" fill="#fff"/><path d="M5.500 5.800h2.500v3.700h1v1.100h-3.700v-1.100h1.100v-2.600h-.9z" fill="#fff"/></svg>
<div class="t g b r22" style="left:510px;top:930px">top_qsys.hps_system.nios2_resettaken_pio</div>
<div class="t g r22" style="left:765px;top:930px;letter-spacing:-.09px">PIO inputs are not hardwired in test bench. Undefined values will be read from PIO inputs during simulation.</div>
<svg class="a" style="left:453px;top:956px" width="14" height="14" viewBox="0 0 14 14"><circle cx="7" cy="7" r="6.300" fill="url(#ig)" stroke="url(#is)" stroke-width="1.300"/><circle cx="7" cy="7" r="5.100" fill="none" stroke="#b9d3ef" stroke-width=".8"/><rect x="6.100" y="3.100" width="1.900" height="1.700" fill="#fff"/><path d="M5.500 5.800h2.500v3.700h1v1.100h-3.700v-1.100h1.100v-2.600h-.9z" fill="#fff"/></svg>
<div class="t g b r22" style="left:510px;top:952px">top_qsys.hps_system.sysid_qsys</div>
<div class="t g r22" style="left:765px;top:952px;letter-spacing:-.09px">System ID is not assigned automatically. Edit the System ID parameter to provide a unique ID</div>
<div class="sb" style="left:1881px;top:796px;width:17px;height:182px"></div>
<div class="a" style="left:1881px;top:798px;width:16px;height:22px;background:#dcdcdc;border:1px solid #b4b4b4"></div>
<svg class="a" style="left:1882px;top:799px" width="15" height="17" viewBox="0 0 15 17"><rect x="2" y="1.500" width="12.500" height="13" fill="#c9c3ee"/><path d="M6.500 1.500v13M10.500 1.500v13M2 6h12.500M2 10.500h12.500" stroke="#a79fe0" stroke-width=".8"/><path d="M4.500 7l8.500 8" stroke="#222" stroke-width="2.200"/><path d="M5.500 7l7 6.600" stroke="#e8e8e8" stroke-width=".7" stroke-dasharray="1.500 1.500"/><path d="M0 6.500h8M4 2.500v8M1.200 3.700l5.600 5.600M6.800 3.700l-5.600 5.600" stroke="#eab020" stroke-width="1.200"/><circle cx="4" cy="6.500" r="1.600" fill="#fff1b0"/></svg>
<div class="th" style="left:1881px;top:838px;width:15px;height:61px"></div>
<svg class="a" style="left:1884px;top:827px" width="10" height="7" viewBox="0 0 10 7"><path d="M1.400 5.800l3.600-3.900l3.600 3.900" fill="none" stroke="#555" stroke-width="2"/></svg>
<svg class="a" style="left:1884px;top:966px" width="10" height="7" viewBox="0 0 10 7"><path d="M1.400 1.200l3.600 3.900l3.600-3.900" fill="none" stroke="#555" stroke-width="2"/></svg>
<div class="sb" style="left:433px;top:978px;width:1465px;height:17px"></div>
<div class="th" style="left:450px;top:979px;width:1242px;height:15px"></div>
<svg class="a" style="left:437px;top:981px" width="7" height="10" viewBox="0 0 7 10"><path d="M5.800 1.400l-3.900 3.600l3.900 3.600" fill="none" stroke="#555" stroke-width="2"/></svg>
<svg class="a" style="left:1868px;top:981px" width="7" height="10" viewBox="0 0 7 10"><path d="M1.200 1.400l3.900 3.600l-3.900 3.600" fill="none" stroke="#555" stroke-width="2"/></svg>
<div class="a" style="left:7px;top:1005px;width:1745px;height:21px;background:#b4f0b4;border:1px solid #a0c8a0"></div>
<div class="t" style="left:14px;top:1007px;height:16px;line-height:16px">0 Errors, 0 Warnings</div>
<div class="btn" style="left:1756px;top:1005px;width:95px;height:21px;line-height:19px">Generate HDL...</div>
<div class="btn" style="left:1857px;top:1005px;width:43px;height:21px;line-height:19px">Finish</div>
</body></html>
